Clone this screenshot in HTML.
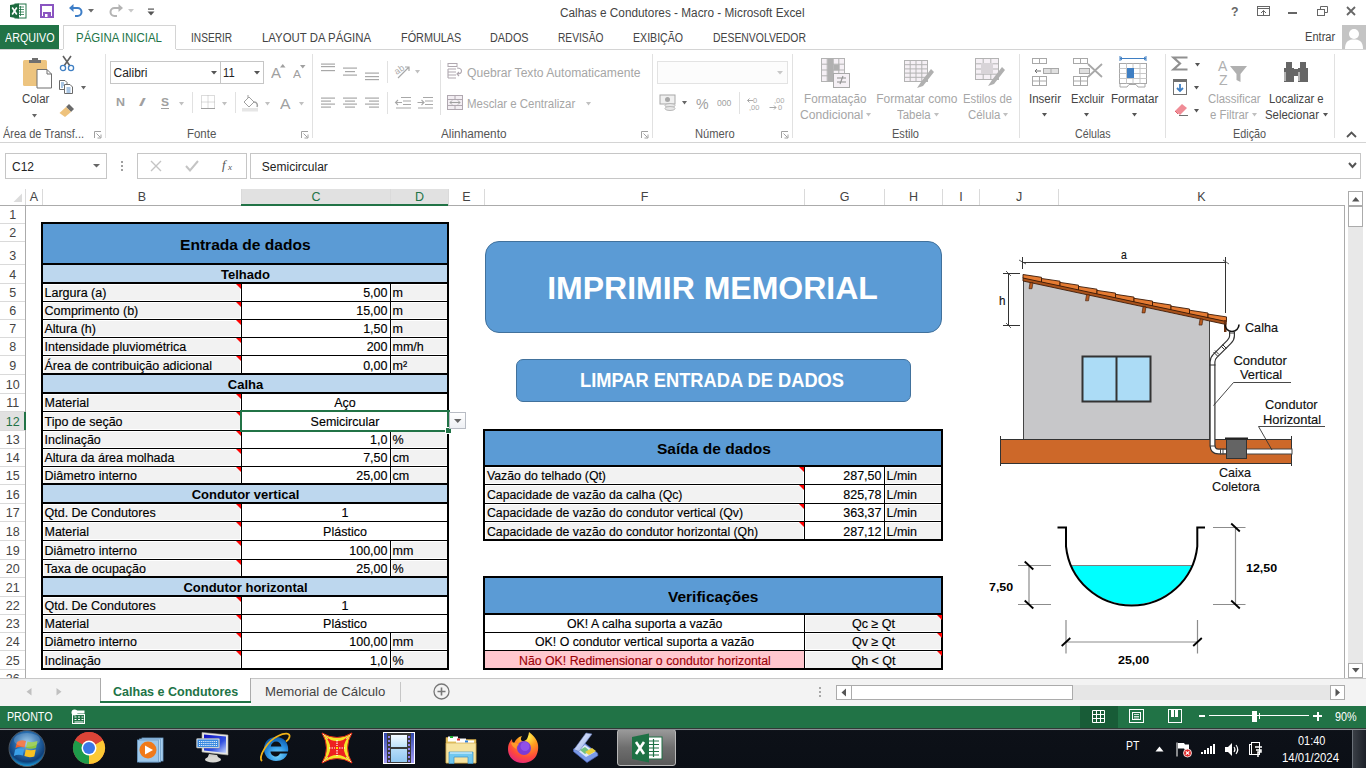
<!DOCTYPE html>
<html><head><meta charset="utf-8"><title>Calhas e Condutores - Macro - Microsoft Excel</title>
<style>
html,body{margin:0;padding:0;}
body{width:1366px;height:768px;overflow:hidden;position:relative;background:#fff;font-family:"Liberation Sans",sans-serif;}
.t{position:absolute;white-space:pre;font-family:"Liberation Sans",sans-serif;}
.k{-webkit-text-stroke:0.15px currentColor;}
.r{position:absolute;}
.s{position:absolute;overflow:visible;}
</style></head><body>

<svg class="s" style="left:10px;top:3px;" width="17" height="16" viewBox="0 0 17 16"><rect x="5" y="1" width="11" height="14" fill="#fff" stroke="#217346" stroke-width="1"/><path d="M8 4h6M8 6.5h6M8 9h6M8 11.5h6M10.5 3v10" stroke="#217346" stroke-width="0.8"/><path d="M0 2 L9 0.5 V15.5 L0 14 Z" fill="#1d6b3f"/><path d="M2.2 4.5 L6.8 11.5 M6.8 4.5 L2.2 11.5" stroke="#fff" stroke-width="1.6"/></svg>
<svg class="s" style="left:40px;top:4px;" width="14" height="14" viewBox="0 0 14 14"><rect x="1" y="1" width="12" height="12" fill="#fff" stroke="#8a55c1" stroke-width="2"/><rect x="3" y="8" width="8" height="6" fill="#8a55c1"/><rect x="5" y="10" width="2.5" height="3" fill="#fff"/></svg>
<svg class="s" style="left:68px;top:3px;" width="16" height="15" viewBox="0 0 16 15"><path d="M4 5 H9.5 A4 4 0 0 1 9.5 13 H7" fill="none" stroke="#3d7ec7" stroke-width="2"/><path d="M1 5 L5.5 1 V9 Z" fill="#3d7ec7"/></svg>
<svg class="s" style="left:88px;top:9px;" width="7" height="4" viewBox="0 0 7 4"><path d="M0 0 H6 L3 3.5Z" fill="#6a6a6a"/></svg>
<svg class="s" style="left:108px;top:3px;" width="16" height="15" viewBox="0 0 16 15"><path d="M12 5 H6.5 A4 4 0 0 0 6.5 13 H9" fill="none" stroke="#b4b4b4" stroke-width="2"/><path d="M15 5 L10.5 1 V9 Z" fill="#b4b4b4"/></svg>
<svg class="s" style="left:128px;top:9px;" width="7" height="4" viewBox="0 0 7 4"><path d="M0 0 H6 L3 3.5Z" fill="#c8c8c8"/></svg>
<svg class="s" style="left:147px;top:8px;" width="8" height="8" viewBox="0 0 8 8"><rect x="1" y="0.5" width="6" height="1.2" fill="#555"/><path d="M0.5 3.5 H7.5 L4 7.5Z" fill="#555"/></svg>
<div class="t" style="left:559.60px;top:7.00px;font-size:12px;line-height:12px;color:#444;transform:scaleX(0.9829);transform-origin:0 0;">Calhas e Condutores - Macro - Microsoft Excel</div>
<div class="t" style="left:1231.00px;top:6.00px;font-size:12px;line-height:12px;color:#666;font-weight:bold;transform:scaleX(1.0231);transform-origin:0 0;">?</div>
<svg class="s" style="left:1257px;top:6px;" width="13" height="10" viewBox="0 0 13 10"><rect x="0.5" y="0.5" width="12" height="9" fill="none" stroke="#666"/><path d="M0.5 2.5H12.5" stroke="#666"/><path d="M6.5 9.5V4.5M4 7L6.5 4.5L9 7" fill="none" stroke="#666"/></svg>
<div class="r" style="left:1288px;top:12px;width:9px;height:2px;background:#666;"></div>
<svg class="s" style="left:1317px;top:6px;" width="11" height="10" viewBox="0 0 11 10"><rect x="0.5" y="3.5" width="7" height="6" fill="#fff" stroke="#666"/><path d="M3.5 3.5V0.5H10.5V6.5H7.5" fill="none" stroke="#666"/></svg>
<svg class="s" style="left:1346px;top:6px;" width="10" height="10" viewBox="0 0 10 10"><path d="M1 1L9 9M9 1L1 9" stroke="#666" stroke-width="1.8"/></svg>
<div class="r" style="left:0px;top:25px;width:59px;height:24px;background:#217346;"></div>
<div class="t" style="left:4.50px;top:31.80px;font-size:12px;line-height:12px;color:#fff;transform:scaleX(0.8944);transform-origin:0 0;">ARQUIVO</div>
<div class="r" style="left:63px;top:25px;width:1px;height:24px;background:#d4d4d4;"></div>
<div class="r" style="left:63px;top:25px;width:113px;height:1px;background:#d4d4d4;"></div>
<div class="r" style="left:175px;top:25px;width:1px;height:24px;background:#d4d4d4;"></div>
<div class="r" style="left:0px;top:49px;width:63px;height:1px;background:#d4d4d4;"></div>
<div class="r" style="left:176px;top:49px;width:1190px;height:1px;background:#d4d4d4;"></div>
<div class="t" style="left:76.00px;top:32.00px;font-size:12px;line-height:12px;color:#217346;transform:scaleX(0.9552);transform-origin:0 0;">PÁGINA INICIAL</div>
<div class="t" style="left:190.60px;top:32.00px;font-size:12px;line-height:12px;color:#444;transform:scaleX(0.8444);transform-origin:0 0;">INSERIR</div>
<div class="t" style="left:261.60px;top:32.00px;font-size:12px;line-height:12px;color:#444;transform:scaleX(0.9493);transform-origin:0 0;">LAYOUT DA PÁGINA</div>
<div class="t" style="left:400.60px;top:32.00px;font-size:12px;line-height:12px;color:#444;transform:scaleX(0.9044);transform-origin:0 0;">FÓRMULAS</div>
<div class="t" style="left:490.20px;top:32.00px;font-size:12px;line-height:12px;color:#444;transform:scaleX(0.9045);transform-origin:0 0;">DADOS</div>
<div class="t" style="left:558.10px;top:32.00px;font-size:12px;line-height:12px;color:#444;transform:scaleX(0.8510);transform-origin:0 0;">REVISÃO</div>
<div class="t" style="left:633.40px;top:32.00px;font-size:12px;line-height:12px;color:#444;transform:scaleX(0.8838);transform-origin:0 0;">EXIBIÇÃO</div>
<div class="t" style="left:713.30px;top:32.00px;font-size:12px;line-height:12px;color:#444;transform:scaleX(0.8671);transform-origin:0 0;">DESENVOLVEDOR</div>
<div class="t" style="left:1304.70px;top:30.70px;font-size:12px;line-height:12px;color:#444;transform:scaleX(0.9241);transform-origin:0 0;">Entrar</div>
<div class="r" style="left:1342px;top:25px;width:24px;height:24px;background:#c4c4c4;"></div>
<svg class="s" style="left:1342px;top:25px;" width="24" height="24" viewBox="0 0 24 24"><circle cx="12" cy="9" r="5" fill="#fff"/><path d="M3 24 C3 16 7 14.5 12 14.5 C17 14.5 21 16 21 24Z" fill="#fff"/></svg>
<div class="r" style="left:0px;top:142px;width:1366px;height:1px;background:#d4d4d4;"></div>
<div class="r" style="left:105px;top:54px;width:1px;height:84px;background:#e1e1e1;"></div>
<div class="r" style="left:312px;top:54px;width:1px;height:84px;background:#e1e1e1;"></div>
<div class="r" style="left:652px;top:54px;width:1px;height:84px;background:#e1e1e1;"></div>
<div class="r" style="left:792px;top:54px;width:1px;height:84px;background:#e1e1e1;"></div>
<div class="r" style="left:1019px;top:54px;width:1px;height:84px;background:#e1e1e1;"></div>
<div class="r" style="left:1165px;top:54px;width:1px;height:84px;background:#e1e1e1;"></div>
<div class="r" style="left:1334px;top:54px;width:1px;height:84px;background:#e1e1e1;"></div>
<div class="t" style="left:3.00px;top:128.00px;font-size:12px;line-height:12px;color:#555;transform:scaleX(0.9131);transform-origin:0 0;">Área de Transf...</div>
<svg class="s" style="left:94px;top:131px;" width="8" height="8" viewBox="0 0 8 8"><path d="M0.5 7V0.5H7" fill="none" stroke="#a0a0a0"/><path d="M2.5 2.5L6.5 6.5M3.5 7H7V3.5" fill="none" stroke="#a0a0a0"/></svg>
<div class="t" style="left:186.50px;top:128.00px;font-size:12px;line-height:12px;color:#555;transform:scaleX(0.9548);transform-origin:0 0;">Fonte</div>
<svg class="s" style="left:301px;top:131px;" width="8" height="8" viewBox="0 0 8 8"><path d="M0.5 7V0.5H7" fill="none" stroke="#a0a0a0"/><path d="M2.5 2.5L6.5 6.5M3.5 7H7V3.5" fill="none" stroke="#a0a0a0"/></svg>
<div class="t" style="left:441.00px;top:128.00px;font-size:12px;line-height:12px;color:#555;transform:scaleX(0.9818);transform-origin:0 0;">Alinhamento</div>
<svg class="s" style="left:641px;top:131px;" width="8" height="8" viewBox="0 0 8 8"><path d="M0.5 7V0.5H7" fill="none" stroke="#a0a0a0"/><path d="M2.5 2.5L6.5 6.5M3.5 7H7V3.5" fill="none" stroke="#a0a0a0"/></svg>
<div class="t" style="left:694.70px;top:128.00px;font-size:12px;line-height:12px;color:#555;transform:scaleX(0.9278);transform-origin:0 0;">Número</div>
<svg class="s" style="left:781px;top:131px;" width="8" height="8" viewBox="0 0 8 8"><path d="M0.5 7V0.5H7" fill="none" stroke="#a0a0a0"/><path d="M2.5 2.5L6.5 6.5M3.5 7H7V3.5" fill="none" stroke="#a0a0a0"/></svg>
<div class="t" style="left:892.40px;top:128.00px;font-size:12px;line-height:12px;color:#555;transform:scaleX(0.9201);transform-origin:0 0;">Estilo</div>
<div class="t" style="left:1074.90px;top:128.00px;font-size:12px;line-height:12px;color:#555;transform:scaleX(0.8895);transform-origin:0 0;">Células</div>
<div class="t" style="left:1233.40px;top:128.00px;font-size:12px;line-height:12px;color:#555;transform:scaleX(0.9021);transform-origin:0 0;">Edição</div>
<svg class="s" style="left:1346px;top:131px;" width="11" height="7" viewBox="0 0 11 7"><path d="M1 6L5.5 1.5L10 6" fill="none" stroke="#555" stroke-width="1.8"/></svg>
<svg class="s" style="left:22px;top:57px;" width="31" height="32" viewBox="0 0 31 32"><rect x="1" y="3" width="24" height="26" rx="1.5" fill="#edc47f"/><path d="M7 6 V3 H10 V1 H16 V3 H19 V6 Z" fill="#6f6f6f"/><path d="M15 12.5 H25 L29.5 17 V31 H15 Z" fill="#fff" stroke="#6f6f6f" stroke-width="1"/><path d="M25 12.5 V17 H29.5" fill="none" stroke="#6f6f6f" stroke-width="1"/></svg>
<div class="t" style="left:21.70px;top:93.30px;font-size:12px;line-height:12px;color:#444;transform:scaleX(0.9520);transform-origin:0 0;">Colar</div>
<svg class="s" style="left:32.0px;top:113.5px;" width="5" height="4" viewBox="0 0 5 4"><path d="M0 0 H5 L2.5 3.5Z" fill="#666"/></svg>
<svg class="s" style="left:59px;top:55px;" width="16" height="17" viewBox="0 0 16 17"><path d="M4 1 L11 11 M12 1 L5 11" stroke="#606060" stroke-width="1.6"/><circle cx="4" cy="13" r="2.6" fill="none" stroke="#3f7fc3" stroke-width="1.3"/><circle cx="12" cy="13" r="2.6" fill="none" stroke="#3f7fc3" stroke-width="1.3"/></svg>
<svg class="s" style="left:58px;top:80px;" width="17" height="14" viewBox="0 0 17 14"><path d="M1.5 0.5H7L9 2.5V9.5H1.5Z" fill="#fff" stroke="#6a6a6a"/><path d="M6.5 4.5H12L14.5 7V13.5H6.5Z" fill="#fff" stroke="#6a6a6a"/><path d="M3 3H6M3 5H6M3 7H5M8.5 8H12.5M8.5 10H12.5M8.5 12H12.5" stroke="#3f7fc3" stroke-width="0.9"/></svg>
<svg class="s" style="left:81.0px;top:86.0px;" width="5" height="4" viewBox="0 0 5 4"><path d="M0 0 H5 L2.5 3.5Z" fill="#666"/></svg>
<svg class="s" style="left:58px;top:102px;" width="18" height="16" viewBox="0 0 18 16"><path d="M11 2 L16 7 L13 10 L8 5Z" fill="#6a6a6a"/><path d="M8 5 L13 10 L7 15 L1.5 11Z" fill="#eec27c"/></svg>
<div class="r" style="left:110px;top:61px;width:111px;height:23px;background:#fff;box-sizing:border-box;border:1px solid #c6c6c6;"></div>
<div class="r" style="left:220px;top:61px;width:44px;height:23px;background:#fff;box-sizing:border-box;border:1px solid #c6c6c6;"></div>
<div class="t" style="left:113.50px;top:66.50px;font-size:12px;line-height:12px;color:#222;">Calibri</div>
<svg class="s" style="left:210.5px;top:71.0px;" width="6" height="4" viewBox="0 0 6 4"><path d="M0 0 H6 L3.0 3.5Z" fill="#555"/></svg>
<div class="t" style="left:223.40px;top:66.50px;font-size:12px;line-height:12px;color:#222;transform:scaleX(0.9312);transform-origin:0 0;">11</div>
<svg class="s" style="left:253.5px;top:71.0px;" width="6" height="4" viewBox="0 0 6 4"><path d="M0 0 H6 L3.0 3.5Z" fill="#555"/></svg>
<div class="t" style="left:270.50px;top:66.00px;font-size:14px;line-height:14px;color:#a0a0a0;transform:scaleX(1.0708);transform-origin:0 0;">A</div>
<svg class="s" style="left:280px;top:64px;" width="6" height="4" viewBox="0 0 6 4"><path d="M0 3.5H5.5L2.75 0Z" fill="#a0a0a0"/></svg>
<div class="t" style="left:293.00px;top:68.50px;font-size:11px;line-height:11px;color:#a0a0a0;transform:scaleX(1.0903);transform-origin:0 0;">A</div>
<svg class="s" style="left:300px;top:65px;" width="6" height="4" viewBox="0 0 6 4"><path d="M0 0H5.5L2.75 3.5Z" fill="#a0a0a0"/></svg>
<div class="t" style="left:116.00px;top:96.75px;font-size:11.5px;line-height:11.5px;color:#a0a0a0;font-weight:bold;transform:scaleX(1.0837);transform-origin:0 0;">N</div>
<div class="t" style="left:138.00px;top:96.75px;font-size:11.5px;line-height:11.5px;color:#a0a0a0;transform:scaleX(2.5040);transform-origin:0 0;font-style:italic;">I</div>
<div class="t" style="left:161.00px;top:96.75px;font-size:11.5px;line-height:11.5px;color:#a0a0a0;font-weight:bold;transform:scaleX(1.0429);transform-origin:0 0;">S</div>
<div class="r" style="left:161px;top:108px;width:8px;height:1px;background:#a0a0a0;"></div>
<svg class="s" style="left:178.5px;top:102.0px;" width="5" height="4" viewBox="0 0 5 4"><path d="M0 0 H5 L2.5 3.5Z" fill="#c0c0c0"/></svg>
<div class="r" style="left:192px;top:92px;width:1px;height:21px;background:#e1e1e1;"></div>
<svg class="s" style="left:201px;top:95px;" width="14" height="14" viewBox="0 0 14 14"><path d="M0.5 0.5H13.5V13.5H0.5ZM7 0.5V13.5M0.5 7H13.5" fill="none" stroke="#b8b8b8" stroke-dasharray="1 1"/><path d="M0 13.5H14" stroke="#a0a0a0"/></svg>
<svg class="s" style="left:222.0px;top:102.0px;" width="5" height="4" viewBox="0 0 5 4"><path d="M0 0 H5 L2.5 3.5Z" fill="#c0c0c0"/></svg>
<div class="r" style="left:235px;top:92px;width:1px;height:21px;background:#e1e1e1;"></div>
<svg class="s" style="left:242px;top:94px;" width="18" height="18" viewBox="0 0 18 18"><path d="M6 1 V5" stroke="#a0a0a0"/><path d="M2 8 L7 3 L12 8 L7 13Z" fill="#fff" stroke="#a0a0a0"/><path d="M12 8 C15 8 16 11 15 13" fill="none" stroke="#a0a0a0" stroke-width="1.5"/><rect x="0" y="14" width="16" height="3.5" fill="#e6e6e6"/></svg>
<svg class="s" style="left:265.0px;top:102.0px;" width="5" height="4" viewBox="0 0 5 4"><path d="M0 0 H5 L2.5 3.5Z" fill="#c0c0c0"/></svg>
<div class="t" style="left:280.00px;top:96.50px;font-size:14px;line-height:14px;color:#a0a0a0;transform:scaleX(1.1244);transform-origin:0 0;">A</div>
<svg class="s" style="left:299.0px;top:102.0px;" width="5" height="4" viewBox="0 0 5 4"><path d="M0 0 H5 L2.5 3.5Z" fill="#c0c0c0"/></svg>
<svg class="s" style="left:321px;top:63px;" width="16" height="16" viewBox="0 0 16 16"><rect x="0" y="0.5" width="14" height="1.2" fill="#a8a8a8"/><rect x="0" y="3" width="14" height="1.2" fill="#a8a8a8"/><rect x="0" y="7" width="14" height="1.2" fill="#a8a8a8"/></svg>
<svg class="s" style="left:343px;top:67px;" width="16" height="16" viewBox="0 0 16 16"><rect x="0" y="0.5" width="14" height="1.2" fill="#a8a8a8"/><rect x="2" y="4" width="10" height="1.2" fill="#a8a8a8"/><rect x="0" y="7.5" width="14" height="1.2" fill="#a8a8a8"/></svg>
<svg class="s" style="left:365px;top:72px;" width="16" height="16" viewBox="0 0 16 16"><rect x="0" y="0.5" width="14" height="1.2" fill="#a8a8a8"/><rect x="0" y="4" width="14" height="1.2" fill="#a8a8a8"/><rect x="0" y="7" width="14" height="1.2" fill="#a8a8a8"/></svg>
<svg class="s" style="left:321px;top:97px;" width="16" height="16" viewBox="0 0 16 16"><rect x="0" y="0.5" width="14" height="1.2" fill="#a8a8a8"/><rect x="0" y="3.5" width="10" height="1.2" fill="#a8a8a8"/><rect x="0" y="6.5" width="14" height="1.2" fill="#a8a8a8"/><rect x="0" y="9.5" width="10" height="1.2" fill="#a8a8a8"/></svg>
<svg class="s" style="left:343px;top:97px;" width="16" height="16" viewBox="0 0 16 16"><rect x="0" y="0.5" width="14" height="1.2" fill="#a8a8a8"/><rect x="2" y="3.5" width="10" height="1.2" fill="#a8a8a8"/><rect x="0" y="6.5" width="14" height="1.2" fill="#a8a8a8"/><rect x="2" y="9.5" width="10" height="1.2" fill="#a8a8a8"/></svg>
<svg class="s" style="left:365px;top:97px;" width="16" height="16" viewBox="0 0 16 16"><rect x="0" y="0.5" width="14" height="1.2" fill="#a8a8a8"/><rect x="4" y="3.5" width="10" height="1.2" fill="#a8a8a8"/><rect x="0" y="6.5" width="14" height="1.2" fill="#a8a8a8"/><rect x="4" y="9.5" width="10" height="1.2" fill="#a8a8a8"/></svg>
<div class="r" style="left:387px;top:61px;width:1px;height:22px;background:#e1e1e1;"></div>
<div class="r" style="left:387px;top:92px;width:1px;height:22px;background:#e1e1e1;"></div>
<svg class="s" style="left:394px;top:63px;" width="18" height="16" viewBox="0 0 18 16"><text x="1" y="10" font-size="9" fill="#a8a8a8" transform="rotate(-35 5 8)" font-family="Liberation Sans">ab</text><path d="M4 15 L15 4 M11 4H15V8" fill="none" stroke="#a8a8a8" stroke-width="1.2"/></svg>
<svg class="s" style="left:415.0px;top:69.5px;" width="5" height="4" viewBox="0 0 5 4"><path d="M0 0 H5 L2.5 3.5Z" fill="#c0c0c0"/></svg>
<svg class="s" style="left:395px;top:97px;" width="17" height="12" viewBox="0 0 17 12"><path d="M6 0.5H16M8 4H16M8 7.5H16M1 11H16" stroke="#a8a8a8" stroke-width="1.1"/><path d="M0.5 5.5H7 M3 3L0.5 5.5L3 8" fill="none" stroke="#a8a8a8" stroke-width="1.1"/></svg>
<svg class="s" style="left:417px;top:97px;" width="17" height="12" viewBox="0 0 17 12"><path d="M6 0.5H16M8 4H16M8 7.5H16M1 11H16" stroke="#a8a8a8" stroke-width="1.1"/><path d="M0.5 5.5H7 M4.5 3L7 5.5L4.5 8" fill="none" stroke="#a8a8a8" stroke-width="1.1"/></svg>
<div class="r" style="left:440px;top:60px;width:1px;height:55px;background:#e1e1e1;"></div>
<svg class="s" style="left:447px;top:63px;" width="18" height="16" viewBox="0 0 18 16"><rect x="1" y="0.5" width="9" height="3" fill="none" stroke="#b0a8b0"/><path d="M1 6H9M1 9H9M1 12H9M1 15H9M1 6V15" stroke="#b0a8b0" stroke-width="1.1"/><path d="M10 5 C16 5 16 11 10 11 M12 9L10 11L12 13" fill="none" stroke="#b0a8b0" stroke-width="1.1"/></svg>
<div class="t" style="left:467.40px;top:67.20px;font-size:12px;line-height:12px;color:#a6a6a6;transform:scaleX(1.0094);transform-origin:0 0;">Quebrar Texto Automaticamente</div>
<svg class="s" style="left:447px;top:95px;" width="17" height="15" viewBox="0 0 17 15"><rect x="0.5" y="0.5" width="15" height="14" fill="#f3eef3" stroke="#b0a8b0"/><path d="M0.5 4.5H15.5M0.5 10.5H15.5M8 0.5V4.5M8 10.5V14.5" stroke="#b0a8b0"/><path d="M3 7.5H13M5 5.5L3 7.5L5 9.5M11 5.5L13 7.5L11 9.5" fill="none" stroke="#a0a0a0"/></svg>
<div class="t" style="left:467.40px;top:97.80px;font-size:12px;line-height:12px;color:#a6a6a6;transform:scaleX(0.9544);transform-origin:0 0;">Mesclar e Centralizar</div>
<svg class="s" style="left:586.0px;top:102.0px;" width="5" height="4" viewBox="0 0 5 4"><path d="M0 0 H5 L2.5 3.5Z" fill="#c0c0c0"/></svg>
<div class="r" style="left:657px;top:61px;width:131px;height:23px;background:#fcfcfc;box-sizing:border-box;border:1px solid #e3e3e3;"></div>
<svg class="s" style="left:777.0px;top:71.0px;" width="6" height="4" viewBox="0 0 6 4"><path d="M0 0 H6 L3.0 3.5Z" fill="#c8c8c8"/></svg>
<svg class="s" style="left:659px;top:94px;" width="18" height="18" viewBox="0 0 18 18"><rect x="1" y="1" width="15" height="9" fill="#f0f0f0" stroke="#a8a8a8"/><circle cx="8.5" cy="5.5" r="2.5" fill="#a8a8a8"/><ellipse cx="11" cy="11.5" rx="5" ry="2" fill="#e8e8e8" stroke="#b8b8b8"/><ellipse cx="11" cy="14.5" rx="5" ry="2" fill="#e8e8e8" stroke="#b8b8b8"/></svg>
<svg class="s" style="left:682.0px;top:101.0px;" width="5" height="4" viewBox="0 0 5 4"><path d="M0 0 H5 L2.5 3.5Z" fill="#666"/></svg>
<div class="t" style="left:696.00px;top:95.80px;font-size:15px;line-height:15px;color:#a0a0a0;transform:scaleX(0.9447);transform-origin:0 0;">%</div>
<div class="t" style="left:716.60px;top:97.75px;font-size:9.5px;line-height:9.5px;color:#a0a0a0;transform:scaleX(0.9085);transform-origin:0 0;">000</div>
<div class="r" style="left:739px;top:92px;width:1px;height:22px;background:#e1e1e1;"></div>
<svg class="s" style="left:747px;top:97px;" width="16" height="14" viewBox="0 0 16 14"><text x="6" y="6" font-size="7.5" fill="#a8a8a8" font-family="Liberation Sans">0</text><text x="2" y="13" font-size="7.5" fill="#a8a8a8" font-family="Liberation Sans">,00</text><path d="M0.5 3.5H6 M2.5 1.5L0.5 3.5L2.5 5.5" fill="none" stroke="#a8a8a8"/></svg>
<svg class="s" style="left:769px;top:97px;" width="16" height="14" viewBox="0 0 16 14"><text x="5" y="6" font-size="7.5" fill="#a8a8a8" font-family="Liberation Sans">,00</text><text x="9" y="13" font-size="7.5" fill="#a8a8a8" font-family="Liberation Sans">0</text><path d="M0.5 10.5H7 M5 8.5L7 10.5L5 12.5" fill="none" stroke="#a8a8a8"/></svg>
<svg class="s" style="left:821px;top:58px;" width="32" height="32" viewBox="0 0 32 32"><rect x="0.5" y="0.5" width="23" height="23" fill="#f5f0f5" stroke="#b3b3b3"/><path d="M6.2 0.5V23.5" stroke="#b3b3b3"/><path d="M12.0 0.5V23.5" stroke="#b3b3b3"/><path d="M17.8 0.5V23.5" stroke="#b3b3b3"/><path d="M0.5 6.2H23.5" stroke="#b3b3b3"/><path d="M0.5 12.0H23.5" stroke="#b3b3b3"/><path d="M0.5 17.8H23.5" stroke="#b3b3b3"/><rect x="6.5" y="0.5" width="6" height="23" fill="#b0b0b0"/><rect x="12.5" y="6.5" width="6" height="6" fill="#b0b0b0"/><rect x="12.5" y="15.5" width="16" height="14" fill="#f5f0f5" stroke="#a8a8a8"/><path d="M16 20H25M16 24H25M22 18L19 26" stroke="#909090" stroke-width="1.1"/></svg>
<div class="t" style="left:804.20px;top:93.10px;font-size:12px;line-height:12px;color:#a6a6a6;transform:scaleX(0.9761);transform-origin:0 0;">Formatação</div>
<div class="t" style="left:799.60px;top:108.90px;font-size:12px;line-height:12px;color:#a6a6a6;transform:scaleX(1.0094);transform-origin:0 0;">Condicional</div>
<svg class="s" style="left:866.1px;top:112.5px;" width="5" height="4" viewBox="0 0 5 4"><path d="M0 0 H5 L2.5 3.5Z" fill="#c0c0c0"/></svg>
<svg class="s" style="left:904px;top:60px;" width="32" height="30" viewBox="0 0 32 30"><rect x="0.5" y="0.5" width="23" height="21" fill="#f5f0f5" stroke="#b3b3b3"/><path d="M6.2 0.5V21.5" stroke="#b3b3b3"/><path d="M12.0 0.5V21.5" stroke="#b3b3b3"/><path d="M17.8 0.5V21.5" stroke="#b3b3b3"/><path d="M0.5 4.7H23.5" stroke="#b3b3b3"/><path d="M0.5 8.9H23.5" stroke="#b3b3b3"/><path d="M0.5 13.1H23.5" stroke="#b3b3b3"/><path d="M0.5 17.3H23.5" stroke="#b3b3b3"/><path d="M30 12 L19 26 L13 28 L17 22 L27 9Z" fill="#b0b0b0"/></svg>
<div class="t" style="left:876.20px;top:93.10px;font-size:12px;line-height:12px;color:#a6a6a6;">Formatar como</div>
<div class="t" style="left:896.80px;top:108.90px;font-size:12px;line-height:12px;color:#a6a6a6;transform:scaleX(0.9530);transform-origin:0 0;">Tabela</div>
<svg class="s" style="left:933.7px;top:112.5px;" width="5" height="4" viewBox="0 0 5 4"><path d="M0 0 H5 L2.5 3.5Z" fill="#c0c0c0"/></svg>
<svg class="s" style="left:975px;top:58px;" width="32" height="30" viewBox="0 0 32 30"><rect x="0.5" y="0.5" width="23" height="21" fill="#f5f0f5" stroke="#b3b3b3"/><path d="M8.2 0.5V21.5" stroke="#b3b3b3"/><path d="M15.8 0.5V21.5" stroke="#b3b3b3"/><path d="M0.5 5.8H23.5" stroke="#b3b3b3"/><path d="M0.5 11.0H23.5" stroke="#b3b3b3"/><path d="M0.5 16.2H23.5" stroke="#b3b3b3"/><rect x="6" y="5" width="12" height="11" fill="#d8d4d8"/><path d="M30 12 L19 26 L13 28 L17 22 L27 9Z" fill="#b0b0b0"/></svg>
<div class="t" style="left:963.40px;top:93.10px;font-size:12px;line-height:12px;color:#a6a6a6;transform:scaleX(0.9418);transform-origin:0 0;">Estilos de</div>
<div class="t" style="left:967.60px;top:108.90px;font-size:12px;line-height:12px;color:#a6a6a6;transform:scaleX(0.9524);transform-origin:0 0;">Célula</div>
<svg class="s" style="left:1002.5px;top:112.5px;" width="5" height="4" viewBox="0 0 5 4"><path d="M0 0 H5 L2.5 3.5Z" fill="#c0c0c0"/></svg>
<svg class="s" style="left:1032px;top:58px;" width="27" height="28" viewBox="0 0 27 28"><rect x="0.5" y="0.5" width="14" height="5" fill="#fff" stroke="#a8a8a8"/><path d="M7.5 0.5V5.5" stroke="#a8a8a8"/><rect x="11.5" y="10.5" width="15" height="5" fill="#e0e0e0" stroke="#a8a8a8"/><path d="M19 10.5V15.5" stroke="#a8a8a8"/><path d="M3 13H9M5 11L3 13L5 15" fill="none" stroke="#707070"/><rect x="0.5" y="18.5" width="14" height="9" fill="#fff" stroke="#a8a8a8"/><path d="M7.5 18.5V27.5M0.5 23H14.5" stroke="#a8a8a8"/></svg>
<div class="t" style="left:1029.00px;top:93.10px;font-size:12px;line-height:12px;color:#444;transform:scaleX(0.9598);transform-origin:0 0;">Inserir</div>
<svg class="s" style="left:1042.0px;top:113.0px;" width="5" height="4" viewBox="0 0 5 4"><path d="M0 0 H5 L2.5 3.5Z" fill="#555"/></svg>
<svg class="s" style="left:1073px;top:58px;" width="31" height="28" viewBox="0 0 31 28"><rect x="0.5" y="0.5" width="14" height="5" fill="#fff" stroke="#a8a8a8"/><path d="M7.5 0.5V5.5" stroke="#a8a8a8"/><rect x="6.5" y="10.5" width="10" height="5" fill="#e0e0e0" stroke="#a8a8a8"/><rect x="0.5" y="18.5" width="14" height="9" fill="#fff" stroke="#a8a8a8"/><path d="M7.5 18.5V27.5M0.5 23H14.5" stroke="#a8a8a8"/><path d="M15 6 L29 19 M29 6 L15 19" stroke="#a8a8a8" stroke-width="1.8"/></svg>
<div class="t" style="left:1070.50px;top:93.10px;font-size:12px;line-height:12px;color:#444;transform:scaleX(0.9248);transform-origin:0 0;">Excluir</div>
<svg class="s" style="left:1084.0px;top:113.0px;" width="5" height="4" viewBox="0 0 5 4"><path d="M0 0 H5 L2.5 3.5Z" fill="#555"/></svg>
<svg class="s" style="left:1119px;top:56px;" width="30" height="33" viewBox="0 0 30 33"><path d="M1 2.5H27M1 0V5M27 0V5M3 1L1 2.5L3 4M25 1L27 2.5L25 4" fill="none" stroke="#3f7fc3"/><rect x="0.5" y="7.5" width="27" height="20" fill="#fff" stroke="#a8a8a8"/><path d="M7.5 7.5V27.5M14 7.5V27.5M21 7.5V27.5M0.5 12.5H27.5M0.5 17.5H27.5M0.5 22.5H27.5" stroke="#c8c8c8"/><rect x="8" y="12" width="7" height="10" fill="#3f7fc3"/><path d="M1 27.5V31H8L10 28.5H17L19 31H26V27.5" fill="none" stroke="#a8a8a8"/></svg>
<div class="t" style="left:1110.70px;top:93.10px;font-size:12px;line-height:12px;color:#444;transform:scaleX(0.9717);transform-origin:0 0;">Formatar</div>
<svg class="s" style="left:1132.0px;top:113.0px;" width="5" height="4" viewBox="0 0 5 4"><path d="M0 0 H5 L2.5 3.5Z" fill="#555"/></svg>
<svg class="s" style="left:1172px;top:56px;" width="17" height="15" viewBox="0 0 17 15"><path d="M15.5 1.5H1.5L8 7.5L1.5 13.5H15.5" fill="none" stroke="#909090" stroke-width="2.2"/></svg>
<svg class="s" style="left:1195.0px;top:63.0px;" width="5" height="4" viewBox="0 0 5 4"><path d="M0 0 H5 L2.5 3.5Z" fill="#555"/></svg>
<svg class="s" style="left:1173px;top:79px;" width="15" height="16" viewBox="0 0 15 16"><rect x="0.5" y="0.5" width="13" height="15" fill="#fff" stroke="#707070"/><rect x="0" y="0" width="14" height="3" fill="#707070"/><path d="M7 5V12M4 9L7 12L10 9" fill="none" stroke="#3f7fc3" stroke-width="1.8"/></svg>
<svg class="s" style="left:1193.5px;top:86.0px;" width="5" height="4" viewBox="0 0 5 4"><path d="M0 0 H5 L2.5 3.5Z" fill="#555"/></svg>
<svg class="s" style="left:1174px;top:103px;" width="15" height="13" viewBox="0 0 15 13"><path d="M1 8 L8 1 L13 5 L6 12Z" fill="#f08c96"/><path d="M1 8L4 11" stroke="#e0606a"/><path d="M5 12.5H14" stroke="#707070"/></svg>
<svg class="s" style="left:1193.5px;top:109.0px;" width="5" height="4" viewBox="0 0 5 4"><path d="M0 0 H5 L2.5 3.5Z" fill="#555"/></svg>
<svg class="s" style="left:1218px;top:59px;" width="31" height="27" viewBox="0 0 31 27"><text x="0" y="12" font-size="14" fill="#b0b0b0" font-family="Liberation Sans">A</text><text x="1" y="26" font-size="14" fill="#b0b0b0" font-family="Liberation Sans">Z</text><path d="M12 7H29L22.5 15V23L18.5 21V15Z" fill="#b0b0b0"/></svg>
<div class="t" style="left:1207.50px;top:93.40px;font-size:12px;line-height:12px;color:#a6a6a6;transform:scaleX(0.9486);transform-origin:0 0;">Classificar</div>
<div class="t" style="left:1210.40px;top:109.00px;font-size:12px;line-height:12px;color:#a6a6a6;transform:scaleX(0.9491);transform-origin:0 0;">e Filtrar</div>
<svg class="s" style="left:1252.3px;top:112.5px;" width="5" height="4" viewBox="0 0 5 4"><path d="M0 0 H5 L2.5 3.5Z" fill="#c0c0c0"/></svg>
<svg class="s" style="left:1283px;top:60px;" width="26" height="23" viewBox="0 0 26 23"><path d="M3 2H9V8H11V22H1V8H3Z" fill="#666"/><path d="M17 2H23V8H25V22H15V8H17Z" fill="#666"/><rect x="10" y="9" width="6" height="7" fill="#666"/><path d="M2 12V21M16 12V21" stroke="#fff" stroke-width="1"/></svg>
<div class="t" style="left:1269.40px;top:93.40px;font-size:12px;line-height:12px;color:#444;transform:scaleX(0.9408);transform-origin:0 0;">Localizar e</div>
<div class="t" style="left:1265.00px;top:109.00px;font-size:12px;line-height:12px;color:#444;transform:scaleX(0.9523);transform-origin:0 0;">Selecionar</div>
<svg class="s" style="left:1322.5px;top:112.5px;" width="5" height="4" viewBox="0 0 5 4"><path d="M0 0 H5 L2.5 3.5Z" fill="#555"/></svg>
<div class="r" style="left:5px;top:153px;width:102px;height:26px;background:#fff;box-sizing:border-box;border:1px solid #c6c6c6;"></div>
<div class="t" style="left:12.00px;top:160.70px;font-size:12px;line-height:12px;color:#222;">C12</div>
<svg class="s" style="left:92.5px;top:163.5px;" width="7" height="4" viewBox="0 0 7 4"><path d="M0 0 H7 L3.5 3.5Z" fill="#666"/></svg>
<div class="r" style="left:121px;top:161px;width:2px;height:2px;background:#a0a0a0;"></div>
<div class="r" style="left:121px;top:165px;width:2px;height:2px;background:#a0a0a0;"></div>
<div class="r" style="left:121px;top:169px;width:2px;height:2px;background:#a0a0a0;"></div>
<div class="r" style="left:137px;top:153px;width:110px;height:26px;background:#fff;box-sizing:border-box;border:1px solid #c6c6c6;"></div>
<svg class="s" style="left:150px;top:160px;" width="12" height="12" viewBox="0 0 12 12"><path d="M1 1L11 11M11 1L1 11" stroke="#c4c4c4" stroke-width="1.4"/></svg>
<svg class="s" style="left:185px;top:160px;" width="14" height="12" viewBox="0 0 14 12"><path d="M1 6L5 10.5L13 1" fill="none" stroke="#c4c4c4" stroke-width="2"/></svg>
<svg class="s" style="left:222px;top:158px;" width="14" height="15" viewBox="0 0 14 15"><text x="0" y="11" font-size="13" font-style="italic" fill="#555" font-family="Liberation Serif">f</text><text x="6" y="12" font-size="9" font-style="italic" fill="#555" font-family="Liberation Serif">x</text></svg>
<div class="r" style="left:250px;top:153px;width:1111px;height:26px;background:#fff;box-sizing:border-box;border:1px solid #c6c6c6;"></div>
<div class="t" style="left:261.80px;top:160.70px;font-size:12px;line-height:12px;color:#222;">Semicircular</div>
<svg class="s" style="left:1348px;top:162px;" width="9" height="7" viewBox="0 0 9 7"><path d="M1 1L4.5 5L8 1" fill="none" stroke="#555" stroke-width="2"/></svg>
<svg class="s" style="left:13px;top:193px;" width="10" height="10" viewBox="0 0 10 10"><path d="M9 0.5V9H0.5Z" fill="#dcdcdc"/></svg>
<div class="r" style="left:25px;top:189px;width:1px;height:16px;background:#dadada;"></div>
<div class="r" style="left:241px;top:189px;width:207px;height:16px;background:#e1e1e1;"></div>
<div class="r" style="left:42px;top:189px;width:1px;height:16px;background:#dadada;"></div>
<div class="t" style="left:29.83px;top:190.55px;font-size:12.5px;line-height:12.5px;color:#444;">A</div>
<div class="r" style="left:241px;top:189px;width:1px;height:16px;background:#dadada;"></div>
<div class="t" style="left:137.83px;top:190.55px;font-size:12.5px;line-height:12.5px;color:#444;">B</div>
<div class="r" style="left:390px;top:189px;width:1px;height:16px;background:#dadada;"></div>
<div class="t" style="left:311.49px;top:190.55px;font-size:12.5px;line-height:12.5px;color:#217346;">C</div>
<div class="r" style="left:448px;top:189px;width:1px;height:16px;background:#dadada;"></div>
<div class="t" style="left:414.99px;top:190.55px;font-size:12.5px;line-height:12.5px;color:#217346;">D</div>
<div class="r" style="left:484px;top:189px;width:1px;height:16px;background:#dadada;"></div>
<div class="t" style="left:462.33px;top:190.55px;font-size:12.5px;line-height:12.5px;color:#444;">E</div>
<div class="r" style="left:804px;top:189px;width:1px;height:16px;background:#dadada;"></div>
<div class="t" style="left:640.68px;top:190.55px;font-size:12.5px;line-height:12.5px;color:#444;">F</div>
<div class="r" style="left:884px;top:189px;width:1px;height:16px;background:#dadada;"></div>
<div class="t" style="left:839.64px;top:190.55px;font-size:12.5px;line-height:12.5px;color:#444;">G</div>
<div class="r" style="left:942px;top:189px;width:1px;height:16px;background:#dadada;"></div>
<div class="t" style="left:908.99px;top:190.55px;font-size:12.5px;line-height:12.5px;color:#444;">H</div>
<div class="r" style="left:979px;top:189px;width:1px;height:16px;background:#dadada;"></div>
<div class="t" style="left:959.26px;top:190.55px;font-size:12.5px;line-height:12.5px;color:#444;">I</div>
<div class="r" style="left:1058px;top:189px;width:1px;height:16px;background:#dadada;"></div>
<div class="t" style="left:1015.88px;top:190.55px;font-size:12.5px;line-height:12.5px;color:#444;">J</div>
<div class="t" style="left:1197.33px;top:190.55px;font-size:12.5px;line-height:12.5px;color:#444;">K</div>
<div class="r" style="left:0px;top:205px;width:1344px;height:1px;background:#ababab;"></div>
<div class="r" style="left:241px;top:204px;width:207px;height:2px;background:#217346;"></div>
<div class="r" style="left:25px;top:205px;width:1px;height:473px;background:#ababab;"></div>
<div class="r" style="left:1344px;top:205px;width:1px;height:473px;background:#ababab;"></div>
<div class="r" style="left:0px;top:412px;width:25px;height:18px;background:#e1e1e1;"></div>
<div class="r" style="left:24px;top:412px;width:2px;height:18px;background:#217346;"></div>
<div class="r" style="left:0px;top:223px;width:25px;height:1px;background:#dadada;"></div>
<div class="t" style="left:9.32px;top:208.75px;font-size:12.5px;line-height:12.5px;color:#444;">1</div>
<div class="r" style="left:0px;top:241px;width:25px;height:1px;background:#dadada;"></div>
<div class="t" style="left:9.32px;top:226.75px;font-size:12.5px;line-height:12.5px;color:#444;">2</div>
<div class="r" style="left:0px;top:264px;width:25px;height:1px;background:#dadada;"></div>
<div class="t" style="left:9.32px;top:249.75px;font-size:12.5px;line-height:12.5px;color:#444;">3</div>
<div class="r" style="left:0px;top:283px;width:25px;height:1px;background:#dadada;"></div>
<div class="t" style="left:9.32px;top:268.75px;font-size:12.5px;line-height:12.5px;color:#444;">4</div>
<div class="r" style="left:0px;top:301px;width:25px;height:1px;background:#dadada;"></div>
<div class="t" style="left:9.32px;top:286.75px;font-size:12.5px;line-height:12.5px;color:#444;">5</div>
<div class="r" style="left:0px;top:319px;width:25px;height:1px;background:#dadada;"></div>
<div class="t" style="left:9.32px;top:304.75px;font-size:12.5px;line-height:12.5px;color:#444;">6</div>
<div class="r" style="left:0px;top:337px;width:25px;height:1px;background:#dadada;"></div>
<div class="t" style="left:9.32px;top:322.75px;font-size:12.5px;line-height:12.5px;color:#444;">7</div>
<div class="r" style="left:0px;top:355px;width:25px;height:1px;background:#dadada;"></div>
<div class="t" style="left:9.32px;top:340.75px;font-size:12.5px;line-height:12.5px;color:#444;">8</div>
<div class="r" style="left:0px;top:374px;width:25px;height:1px;background:#dadada;"></div>
<div class="t" style="left:9.32px;top:359.75px;font-size:12.5px;line-height:12.5px;color:#444;">9</div>
<div class="r" style="left:0px;top:393px;width:25px;height:1px;background:#dadada;"></div>
<div class="t" style="left:5.85px;top:378.75px;font-size:12.5px;line-height:12.5px;color:#444;">10</div>
<div class="r" style="left:0px;top:411px;width:25px;height:1px;background:#dadada;"></div>
<div class="t" style="left:6.31px;top:396.75px;font-size:12.5px;line-height:12.5px;color:#444;">11</div>
<div class="r" style="left:0px;top:430px;width:25px;height:1px;background:#dadada;"></div>
<div class="t" style="left:5.85px;top:415.75px;font-size:12.5px;line-height:12.5px;color:#217346;">12</div>
<div class="r" style="left:0px;top:448px;width:25px;height:1px;background:#dadada;"></div>
<div class="t" style="left:5.85px;top:433.75px;font-size:12.5px;line-height:12.5px;color:#444;">13</div>
<div class="r" style="left:0px;top:466px;width:25px;height:1px;background:#dadada;"></div>
<div class="t" style="left:5.85px;top:451.75px;font-size:12.5px;line-height:12.5px;color:#444;">14</div>
<div class="r" style="left:0px;top:484px;width:25px;height:1px;background:#dadada;"></div>
<div class="t" style="left:5.85px;top:469.75px;font-size:12.5px;line-height:12.5px;color:#444;">15</div>
<div class="r" style="left:0px;top:503px;width:25px;height:1px;background:#dadada;"></div>
<div class="t" style="left:5.85px;top:488.75px;font-size:12.5px;line-height:12.5px;color:#444;">16</div>
<div class="r" style="left:0px;top:521px;width:25px;height:1px;background:#dadada;"></div>
<div class="t" style="left:5.85px;top:506.75px;font-size:12.5px;line-height:12.5px;color:#444;">17</div>
<div class="r" style="left:0px;top:540px;width:25px;height:1px;background:#dadada;"></div>
<div class="t" style="left:5.85px;top:525.75px;font-size:12.5px;line-height:12.5px;color:#444;">18</div>
<div class="r" style="left:0px;top:559px;width:25px;height:1px;background:#dadada;"></div>
<div class="t" style="left:5.85px;top:544.75px;font-size:12.5px;line-height:12.5px;color:#444;">19</div>
<div class="r" style="left:0px;top:577px;width:25px;height:1px;background:#dadada;"></div>
<div class="t" style="left:5.85px;top:562.75px;font-size:12.5px;line-height:12.5px;color:#444;">20</div>
<div class="r" style="left:0px;top:596px;width:25px;height:1px;background:#dadada;"></div>
<div class="t" style="left:5.85px;top:581.75px;font-size:12.5px;line-height:12.5px;color:#444;">21</div>
<div class="r" style="left:0px;top:614px;width:25px;height:1px;background:#dadada;"></div>
<div class="t" style="left:5.85px;top:599.75px;font-size:12.5px;line-height:12.5px;color:#444;">22</div>
<div class="r" style="left:0px;top:632px;width:25px;height:1px;background:#dadada;"></div>
<div class="t" style="left:5.85px;top:617.75px;font-size:12.5px;line-height:12.5px;color:#444;">23</div>
<div class="r" style="left:0px;top:650px;width:25px;height:1px;background:#dadada;"></div>
<div class="t" style="left:5.85px;top:635.75px;font-size:12.5px;line-height:12.5px;color:#444;">24</div>
<div class="r" style="left:0px;top:669px;width:25px;height:1px;background:#dadada;"></div>
<div class="t" style="left:5.85px;top:654.75px;font-size:12.5px;line-height:12.5px;color:#444;">25</div>
<div class="t" style="left:5.85px;top:672.75px;font-size:12.5px;line-height:12.5px;color:#444;">26</div>
<div class="r" style="left:43px;top:224px;width:405px;height:40px;background:#5b9bd5;"></div>
<div class="t" style="left:180.20px;top:236.70px;font-size:15px;line-height:15px;color:#000;font-weight:bold;transform:scaleX(1.0376);transform-origin:0 0;">Entrada de dados</div>
<div class="r" style="left:43px;top:265px;width:405px;height:18px;background:#bdd7ee;"></div>
<div class="r" style="left:43px;top:375px;width:405px;height:18px;background:#bdd7ee;"></div>
<div class="r" style="left:43px;top:485px;width:405px;height:18px;background:#bdd7ee;"></div>
<div class="r" style="left:43px;top:578px;width:405px;height:18px;background:#bdd7ee;"></div>
<div class="r" style="left:44px;top:285px;width:196px;height:15px;background:#f2f2f2;"></div>
<div class="r" style="left:242px;top:284px;width:148px;height:17px;background:#fff;"></div>
<div class="r" style="left:392px;top:285px;width:55px;height:15px;background:#f2f2f2;"></div>
<div class="r" style="left:44px;top:303px;width:196px;height:15px;background:#f2f2f2;"></div>
<div class="r" style="left:242px;top:302px;width:148px;height:17px;background:#fff;"></div>
<div class="r" style="left:392px;top:303px;width:55px;height:15px;background:#f2f2f2;"></div>
<div class="r" style="left:44px;top:321px;width:196px;height:15px;background:#f2f2f2;"></div>
<div class="r" style="left:242px;top:320px;width:148px;height:17px;background:#fff;"></div>
<div class="r" style="left:392px;top:321px;width:55px;height:15px;background:#f2f2f2;"></div>
<div class="r" style="left:44px;top:339px;width:196px;height:15px;background:#f2f2f2;"></div>
<div class="r" style="left:242px;top:338px;width:148px;height:17px;background:#fff;"></div>
<div class="r" style="left:392px;top:339px;width:55px;height:15px;background:#f2f2f2;"></div>
<div class="r" style="left:44px;top:357px;width:196px;height:16px;background:#f2f2f2;"></div>
<div class="r" style="left:242px;top:356px;width:148px;height:18px;background:#fff;"></div>
<div class="r" style="left:392px;top:357px;width:55px;height:16px;background:#f2f2f2;"></div>
<div class="r" style="left:44px;top:395px;width:196px;height:15px;background:#f2f2f2;"></div>
<div class="r" style="left:242px;top:394px;width:206px;height:17px;background:#fff;"></div>
<div class="r" style="left:44px;top:413px;width:196px;height:16px;background:#f2f2f2;"></div>
<div class="r" style="left:242px;top:412px;width:206px;height:18px;background:#fff;"></div>
<div class="r" style="left:44px;top:432px;width:196px;height:15px;background:#f2f2f2;"></div>
<div class="r" style="left:242px;top:431px;width:148px;height:17px;background:#fff;"></div>
<div class="r" style="left:392px;top:432px;width:55px;height:15px;background:#f2f2f2;"></div>
<div class="r" style="left:44px;top:450px;width:196px;height:15px;background:#f2f2f2;"></div>
<div class="r" style="left:242px;top:449px;width:148px;height:17px;background:#fff;"></div>
<div class="r" style="left:392px;top:450px;width:55px;height:15px;background:#f2f2f2;"></div>
<div class="r" style="left:44px;top:468px;width:196px;height:15px;background:#f2f2f2;"></div>
<div class="r" style="left:242px;top:467px;width:148px;height:17px;background:#fff;"></div>
<div class="r" style="left:392px;top:468px;width:55px;height:15px;background:#f2f2f2;"></div>
<div class="r" style="left:44px;top:505px;width:196px;height:15px;background:#f2f2f2;"></div>
<div class="r" style="left:242px;top:504px;width:206px;height:17px;background:#fff;"></div>
<div class="r" style="left:44px;top:523px;width:196px;height:16px;background:#f2f2f2;"></div>
<div class="r" style="left:242px;top:522px;width:206px;height:18px;background:#fff;"></div>
<div class="r" style="left:44px;top:542px;width:196px;height:16px;background:#f2f2f2;"></div>
<div class="r" style="left:242px;top:541px;width:148px;height:18px;background:#fff;"></div>
<div class="r" style="left:392px;top:542px;width:55px;height:16px;background:#f2f2f2;"></div>
<div class="r" style="left:44px;top:561px;width:196px;height:15px;background:#f2f2f2;"></div>
<div class="r" style="left:242px;top:560px;width:148px;height:17px;background:#fff;"></div>
<div class="r" style="left:392px;top:561px;width:55px;height:15px;background:#f2f2f2;"></div>
<div class="r" style="left:44px;top:598px;width:196px;height:15px;background:#f2f2f2;"></div>
<div class="r" style="left:242px;top:597px;width:206px;height:17px;background:#fff;"></div>
<div class="r" style="left:44px;top:616px;width:196px;height:15px;background:#f2f2f2;"></div>
<div class="r" style="left:242px;top:615px;width:206px;height:17px;background:#fff;"></div>
<div class="r" style="left:44px;top:634px;width:196px;height:15px;background:#f2f2f2;"></div>
<div class="r" style="left:242px;top:633px;width:148px;height:17px;background:#fff;"></div>
<div class="r" style="left:392px;top:634px;width:55px;height:15px;background:#f2f2f2;"></div>
<div class="r" style="left:44px;top:652px;width:196px;height:16px;background:#f2f2f2;"></div>
<div class="r" style="left:242px;top:651px;width:148px;height:18px;background:#fff;"></div>
<div class="r" style="left:392px;top:652px;width:55px;height:16px;background:#f2f2f2;"></div>
<div class="r" style="left:42px;top:301px;width:407px;height:1px;background:#000;"></div>
<div class="r" style="left:241px;top:283px;width:1px;height:19px;background:#000;"></div>
<div class="r" style="left:390px;top:283px;width:1px;height:19px;background:#000;"></div>
<div class="r" style="left:42px;top:319px;width:407px;height:1px;background:#000;"></div>
<div class="r" style="left:241px;top:301px;width:1px;height:19px;background:#000;"></div>
<div class="r" style="left:390px;top:301px;width:1px;height:19px;background:#000;"></div>
<div class="r" style="left:42px;top:337px;width:407px;height:1px;background:#000;"></div>
<div class="r" style="left:241px;top:319px;width:1px;height:19px;background:#000;"></div>
<div class="r" style="left:390px;top:319px;width:1px;height:19px;background:#000;"></div>
<div class="r" style="left:42px;top:355px;width:407px;height:1px;background:#000;"></div>
<div class="r" style="left:241px;top:337px;width:1px;height:19px;background:#000;"></div>
<div class="r" style="left:390px;top:337px;width:1px;height:19px;background:#000;"></div>
<div class="r" style="left:42px;top:374px;width:407px;height:1px;background:#000;"></div>
<div class="r" style="left:241px;top:355px;width:1px;height:20px;background:#000;"></div>
<div class="r" style="left:390px;top:355px;width:1px;height:20px;background:#000;"></div>
<div class="r" style="left:42px;top:411px;width:407px;height:1px;background:#000;"></div>
<div class="r" style="left:241px;top:393px;width:1px;height:19px;background:#000;"></div>
<div class="r" style="left:42px;top:430px;width:407px;height:1px;background:#000;"></div>
<div class="r" style="left:241px;top:411px;width:1px;height:20px;background:#000;"></div>
<div class="r" style="left:42px;top:448px;width:407px;height:1px;background:#000;"></div>
<div class="r" style="left:241px;top:430px;width:1px;height:19px;background:#000;"></div>
<div class="r" style="left:390px;top:430px;width:1px;height:19px;background:#000;"></div>
<div class="r" style="left:42px;top:466px;width:407px;height:1px;background:#000;"></div>
<div class="r" style="left:241px;top:448px;width:1px;height:19px;background:#000;"></div>
<div class="r" style="left:390px;top:448px;width:1px;height:19px;background:#000;"></div>
<div class="r" style="left:42px;top:484px;width:407px;height:1px;background:#000;"></div>
<div class="r" style="left:241px;top:466px;width:1px;height:19px;background:#000;"></div>
<div class="r" style="left:390px;top:466px;width:1px;height:19px;background:#000;"></div>
<div class="r" style="left:42px;top:521px;width:407px;height:1px;background:#000;"></div>
<div class="r" style="left:241px;top:503px;width:1px;height:19px;background:#000;"></div>
<div class="r" style="left:42px;top:540px;width:407px;height:1px;background:#000;"></div>
<div class="r" style="left:241px;top:521px;width:1px;height:20px;background:#000;"></div>
<div class="r" style="left:42px;top:559px;width:407px;height:1px;background:#000;"></div>
<div class="r" style="left:241px;top:540px;width:1px;height:20px;background:#000;"></div>
<div class="r" style="left:390px;top:540px;width:1px;height:20px;background:#000;"></div>
<div class="r" style="left:42px;top:577px;width:407px;height:1px;background:#000;"></div>
<div class="r" style="left:241px;top:559px;width:1px;height:19px;background:#000;"></div>
<div class="r" style="left:390px;top:559px;width:1px;height:19px;background:#000;"></div>
<div class="r" style="left:42px;top:614px;width:407px;height:1px;background:#000;"></div>
<div class="r" style="left:241px;top:596px;width:1px;height:19px;background:#000;"></div>
<div class="r" style="left:42px;top:632px;width:407px;height:1px;background:#000;"></div>
<div class="r" style="left:241px;top:614px;width:1px;height:19px;background:#000;"></div>
<div class="r" style="left:42px;top:650px;width:407px;height:1px;background:#000;"></div>
<div class="r" style="left:241px;top:632px;width:1px;height:19px;background:#000;"></div>
<div class="r" style="left:390px;top:632px;width:1px;height:19px;background:#000;"></div>
<div class="r" style="left:42px;top:669px;width:407px;height:1px;background:#000;"></div>
<div class="r" style="left:241px;top:650px;width:1px;height:20px;background:#000;"></div>
<div class="r" style="left:390px;top:650px;width:1px;height:20px;background:#000;"></div>
<div class="r" style="left:41px;top:263px;width:408px;height:2px;background:#000;"></div>
<div class="r" style="left:41px;top:282px;width:408px;height:2px;background:#000;"></div>
<div class="r" style="left:41px;top:373px;width:408px;height:2px;background:#000;"></div>
<div class="r" style="left:41px;top:392px;width:408px;height:2px;background:#000;"></div>
<div class="r" style="left:41px;top:483px;width:408px;height:2px;background:#000;"></div>
<div class="r" style="left:41px;top:502px;width:408px;height:2px;background:#000;"></div>
<div class="r" style="left:41px;top:576px;width:408px;height:2px;background:#000;"></div>
<div class="r" style="left:41px;top:595px;width:408px;height:2px;background:#000;"></div>
<div class="r" style="left:41px;top:222px;width:408px;height:2px;background:#000;"></div>
<div class="r" style="left:41px;top:263px;width:408px;height:2px;background:#000;"></div>
<div class="r" style="left:41px;top:668px;width:408px;height:2px;background:#000;"></div>
<div class="r" style="left:41px;top:373px;width:408px;height:2px;background:#000;"></div>
<div class="r" style="left:41px;top:483px;width:408px;height:2px;background:#000;"></div>
<div class="r" style="left:41px;top:576px;width:408px;height:2px;background:#000;"></div>
<div class="r" style="left:41px;top:222px;width:2px;height:448px;background:#000;"></div>
<div class="r" style="left:447px;top:222px;width:2px;height:448px;background:#000;"></div>
<svg class="s" style="left:236px;top:284px;" width="5" height="5" viewBox="0 0 5 5"><path d="M0 0H5V5Z" fill="#f00"/></svg>
<div class="t k" style="left:44.50px;top:286.75px;font-size:12.5px;line-height:12.5px;color:#000;">Largura (a)</div>
<div class="t k" style="left:363.17px;top:286.75px;font-size:12.5px;line-height:12.5px;color:#000;">5,00</div>
<div class="t k" style="left:392.50px;top:286.75px;font-size:12.5px;line-height:12.5px;color:#000;">m</div>
<svg class="s" style="left:236px;top:302px;" width="5" height="5" viewBox="0 0 5 5"><path d="M0 0H5V5Z" fill="#f00"/></svg>
<div class="t k" style="left:44.50px;top:304.75px;font-size:12.5px;line-height:12.5px;color:#000;">Comprimento (b)</div>
<div class="t k" style="left:356.22px;top:304.75px;font-size:12.5px;line-height:12.5px;color:#000;">15,00</div>
<div class="t k" style="left:392.50px;top:304.75px;font-size:12.5px;line-height:12.5px;color:#000;">m</div>
<svg class="s" style="left:236px;top:320px;" width="5" height="5" viewBox="0 0 5 5"><path d="M0 0H5V5Z" fill="#f00"/></svg>
<div class="t k" style="left:44.50px;top:322.75px;font-size:12.5px;line-height:12.5px;color:#000;">Altura (h)</div>
<div class="t k" style="left:363.17px;top:322.75px;font-size:12.5px;line-height:12.5px;color:#000;">1,50</div>
<div class="t k" style="left:392.50px;top:322.75px;font-size:12.5px;line-height:12.5px;color:#000;">m</div>
<svg class="s" style="left:236px;top:338px;" width="5" height="5" viewBox="0 0 5 5"><path d="M0 0H5V5Z" fill="#f00"/></svg>
<div class="t k" style="left:44.50px;top:340.75px;font-size:12.5px;line-height:12.5px;color:#000;">Intensidade pluviométrica</div>
<div class="t k" style="left:366.64px;top:340.75px;font-size:12.5px;line-height:12.5px;color:#000;">200</div>
<div class="t k" style="left:392.50px;top:340.75px;font-size:12.5px;line-height:12.5px;color:#000;">mm/h</div>
<svg class="s" style="left:236px;top:356px;" width="5" height="5" viewBox="0 0 5 5"><path d="M0 0H5V5Z" fill="#f00"/></svg>
<div class="t k" style="left:44.50px;top:359.75px;font-size:12.5px;line-height:12.5px;color:#000;">Área de contribuição adicional</div>
<div class="t k" style="left:363.17px;top:359.75px;font-size:12.5px;line-height:12.5px;color:#000;">0,00</div>
<div class="t k" style="left:392.50px;top:359.75px;font-size:12.5px;line-height:12.5px;color:#000;">m²</div>
<svg class="s" style="left:236px;top:394px;" width="5" height="5" viewBox="0 0 5 5"><path d="M0 0H5V5Z" fill="#f00"/></svg>
<div class="t k" style="left:44.50px;top:396.75px;font-size:12.5px;line-height:12.5px;color:#000;">Material</div>
<div class="t k" style="left:334.23px;top:396.75px;font-size:12.5px;line-height:12.5px;color:#000;">Aço</div>
<svg class="s" style="left:236px;top:412px;" width="5" height="5" viewBox="0 0 5 5"><path d="M0 0H5V5Z" fill="#f00"/></svg>
<div class="t k" style="left:44.50px;top:415.75px;font-size:12.5px;line-height:12.5px;color:#000;">Tipo de seção</div>
<div class="t k" style="left:310.62px;top:415.75px;font-size:12.5px;line-height:12.5px;color:#000;">Semicircular</div>
<svg class="s" style="left:236px;top:431px;" width="5" height="5" viewBox="0 0 5 5"><path d="M0 0H5V5Z" fill="#f00"/></svg>
<div class="t k" style="left:44.50px;top:433.75px;font-size:12.5px;line-height:12.5px;color:#000;">Inclinação</div>
<div class="t k" style="left:370.12px;top:433.75px;font-size:12.5px;line-height:12.5px;color:#000;">1,0</div>
<div class="t k" style="left:392.50px;top:433.75px;font-size:12.5px;line-height:12.5px;color:#000;">%</div>
<svg class="s" style="left:236px;top:449px;" width="5" height="5" viewBox="0 0 5 5"><path d="M0 0H5V5Z" fill="#f00"/></svg>
<div class="t k" style="left:44.50px;top:451.75px;font-size:12.5px;line-height:12.5px;color:#000;">Altura da área molhada</div>
<div class="t k" style="left:363.17px;top:451.75px;font-size:12.5px;line-height:12.5px;color:#000;">7,50</div>
<div class="t k" style="left:392.50px;top:451.75px;font-size:12.5px;line-height:12.5px;color:#000;">cm</div>
<svg class="s" style="left:236px;top:467px;" width="5" height="5" viewBox="0 0 5 5"><path d="M0 0H5V5Z" fill="#f00"/></svg>
<div class="t k" style="left:44.50px;top:469.75px;font-size:12.5px;line-height:12.5px;color:#000;">Diâmetro interno</div>
<div class="t k" style="left:356.22px;top:469.75px;font-size:12.5px;line-height:12.5px;color:#000;">25,00</div>
<div class="t k" style="left:392.50px;top:469.75px;font-size:12.5px;line-height:12.5px;color:#000;">cm</div>
<svg class="s" style="left:236px;top:504px;" width="5" height="5" viewBox="0 0 5 5"><path d="M0 0H5V5Z" fill="#f00"/></svg>
<div class="t k" style="left:44.50px;top:506.75px;font-size:12.5px;line-height:12.5px;color:#000;">Qtd. De Condutores</div>
<div class="t k" style="left:341.52px;top:506.75px;font-size:12.5px;line-height:12.5px;color:#000;">1</div>
<svg class="s" style="left:236px;top:522px;" width="5" height="5" viewBox="0 0 5 5"><path d="M0 0H5V5Z" fill="#f00"/></svg>
<div class="t k" style="left:44.50px;top:525.75px;font-size:12.5px;line-height:12.5px;color:#000;">Material</div>
<div class="t k" style="left:323.12px;top:525.75px;font-size:12.5px;line-height:12.5px;color:#000;">Plástico</div>
<svg class="s" style="left:236px;top:541px;" width="5" height="5" viewBox="0 0 5 5"><path d="M0 0H5V5Z" fill="#f00"/></svg>
<div class="t k" style="left:44.50px;top:544.75px;font-size:12.5px;line-height:12.5px;color:#000;">Diâmetro interno</div>
<div class="t k" style="left:349.27px;top:544.75px;font-size:12.5px;line-height:12.5px;color:#000;">100,00</div>
<div class="t k" style="left:392.50px;top:544.75px;font-size:12.5px;line-height:12.5px;color:#000;">mm</div>
<svg class="s" style="left:236px;top:560px;" width="5" height="5" viewBox="0 0 5 5"><path d="M0 0H5V5Z" fill="#f00"/></svg>
<div class="t k" style="left:44.50px;top:562.75px;font-size:12.5px;line-height:12.5px;color:#000;">Taxa de ocupação</div>
<div class="t k" style="left:356.22px;top:562.75px;font-size:12.5px;line-height:12.5px;color:#000;">25,00</div>
<div class="t k" style="left:392.50px;top:562.75px;font-size:12.5px;line-height:12.5px;color:#000;">%</div>
<svg class="s" style="left:236px;top:597px;" width="5" height="5" viewBox="0 0 5 5"><path d="M0 0H5V5Z" fill="#f00"/></svg>
<div class="t k" style="left:44.50px;top:599.75px;font-size:12.5px;line-height:12.5px;color:#000;">Qtd. De Condutores</div>
<div class="t k" style="left:341.52px;top:599.75px;font-size:12.5px;line-height:12.5px;color:#000;">1</div>
<svg class="s" style="left:236px;top:615px;" width="5" height="5" viewBox="0 0 5 5"><path d="M0 0H5V5Z" fill="#f00"/></svg>
<div class="t k" style="left:44.50px;top:617.75px;font-size:12.5px;line-height:12.5px;color:#000;">Material</div>
<div class="t k" style="left:323.12px;top:617.75px;font-size:12.5px;line-height:12.5px;color:#000;">Plástico</div>
<svg class="s" style="left:236px;top:633px;" width="5" height="5" viewBox="0 0 5 5"><path d="M0 0H5V5Z" fill="#f00"/></svg>
<div class="t k" style="left:44.50px;top:635.75px;font-size:12.5px;line-height:12.5px;color:#000;">Diâmetro interno</div>
<div class="t k" style="left:349.27px;top:635.75px;font-size:12.5px;line-height:12.5px;color:#000;">100,00</div>
<div class="t k" style="left:392.50px;top:635.75px;font-size:12.5px;line-height:12.5px;color:#000;">mm</div>
<svg class="s" style="left:236px;top:651px;" width="5" height="5" viewBox="0 0 5 5"><path d="M0 0H5V5Z" fill="#f00"/></svg>
<div class="t k" style="left:44.50px;top:654.75px;font-size:12.5px;line-height:12.5px;color:#000;">Inclinação</div>
<div class="t k" style="left:370.12px;top:654.75px;font-size:12.5px;line-height:12.5px;color:#000;">1,0</div>
<div class="t k" style="left:392.50px;top:654.75px;font-size:12.5px;line-height:12.5px;color:#000;">%</div>
<div class="t" style="left:221.06px;top:268.00px;font-size:13px;line-height:13px;color:#000;font-weight:bold;">Telhado</div>
<div class="t" style="left:227.80px;top:378.00px;font-size:13px;line-height:13px;color:#000;font-weight:bold;">Calha</div>
<div class="t" style="left:191.69px;top:488.00px;font-size:13px;line-height:13px;color:#000;font-weight:bold;">Condutor vertical</div>
<div class="t" style="left:183.40px;top:581.00px;font-size:13px;line-height:13px;color:#000;font-weight:bold;">Condutor horizontal</div>
<div class="r" style="left:485px;top:431px;width:457px;height:35px;background:#5b9bd5;"></div>
<div class="t" style="left:656.50px;top:441.00px;font-size:15px;line-height:15px;color:#000;font-weight:bold;transform:scaleX(1.0360);transform-origin:0 0;">Saída de dados</div>
<div class="r" style="left:486px;top:468px;width:317px;height:15px;background:#f2f2f2;"></div>
<div class="r" style="left:805px;top:467px;width:79px;height:17px;background:#fff;"></div>
<div class="r" style="left:886px;top:468px;width:55px;height:15px;background:#f2f2f2;"></div>
<div class="r" style="left:486px;top:486px;width:317px;height:16px;background:#f2f2f2;"></div>
<div class="r" style="left:805px;top:485px;width:79px;height:18px;background:#fff;"></div>
<div class="r" style="left:886px;top:486px;width:55px;height:16px;background:#f2f2f2;"></div>
<div class="r" style="left:486px;top:505px;width:317px;height:15px;background:#f2f2f2;"></div>
<div class="r" style="left:805px;top:504px;width:79px;height:17px;background:#fff;"></div>
<div class="r" style="left:886px;top:505px;width:55px;height:15px;background:#f2f2f2;"></div>
<div class="r" style="left:486px;top:523px;width:317px;height:16px;background:#f2f2f2;"></div>
<div class="r" style="left:805px;top:522px;width:79px;height:18px;background:#fff;"></div>
<div class="r" style="left:886px;top:523px;width:55px;height:16px;background:#f2f2f2;"></div>
<div class="r" style="left:484px;top:484px;width:459px;height:1px;background:#000;"></div>
<div class="r" style="left:804px;top:466px;width:1px;height:19px;background:#000;"></div>
<div class="r" style="left:884px;top:466px;width:1px;height:19px;background:#000;"></div>
<div class="r" style="left:484px;top:503px;width:459px;height:1px;background:#000;"></div>
<div class="r" style="left:804px;top:484px;width:1px;height:20px;background:#000;"></div>
<div class="r" style="left:884px;top:484px;width:1px;height:20px;background:#000;"></div>
<div class="r" style="left:484px;top:521px;width:459px;height:1px;background:#000;"></div>
<div class="r" style="left:804px;top:503px;width:1px;height:19px;background:#000;"></div>
<div class="r" style="left:884px;top:503px;width:1px;height:19px;background:#000;"></div>
<div class="r" style="left:484px;top:540px;width:459px;height:1px;background:#000;"></div>
<div class="r" style="left:804px;top:521px;width:1px;height:20px;background:#000;"></div>
<div class="r" style="left:884px;top:521px;width:1px;height:20px;background:#000;"></div>
<div class="r" style="left:483px;top:429px;width:460px;height:2px;background:#000;"></div>
<div class="r" style="left:483px;top:465px;width:460px;height:2px;background:#000;"></div>
<div class="r" style="left:483px;top:539px;width:460px;height:2px;background:#000;"></div>
<div class="r" style="left:483px;top:429px;width:2px;height:112px;background:#000;"></div>
<div class="r" style="left:941px;top:429px;width:2px;height:112px;background:#000;"></div>
<svg class="s" style="left:799px;top:467px;" width="5" height="5" viewBox="0 0 5 5"><path d="M0 0H5V5Z" fill="#f00"/></svg>
<div class="t k" style="left:486.50px;top:469.75px;font-size:12.5px;line-height:12.5px;color:#000;transform:scaleX(0.9800);transform-origin:0 0;">Vazão do telhado (Qt)</div>
<div class="t k" style="left:843.27px;top:469.75px;font-size:12.5px;line-height:12.5px;color:#000;">287,50</div>
<div class="t k" style="left:886.50px;top:469.75px;font-size:12.5px;line-height:12.5px;color:#000;">L/min</div>
<svg class="s" style="left:799px;top:485px;" width="5" height="5" viewBox="0 0 5 5"><path d="M0 0H5V5Z" fill="#f00"/></svg>
<div class="t k" style="left:486.50px;top:488.75px;font-size:12.5px;line-height:12.5px;color:#000;transform:scaleX(0.9800);transform-origin:0 0;">Capacidade de vazão da calha (Qc)</div>
<div class="t k" style="left:843.27px;top:488.75px;font-size:12.5px;line-height:12.5px;color:#000;">825,78</div>
<div class="t k" style="left:886.50px;top:488.75px;font-size:12.5px;line-height:12.5px;color:#000;">L/min</div>
<svg class="s" style="left:799px;top:504px;" width="5" height="5" viewBox="0 0 5 5"><path d="M0 0H5V5Z" fill="#f00"/></svg>
<div class="t k" style="left:486.50px;top:506.75px;font-size:12.5px;line-height:12.5px;color:#000;transform:scaleX(0.9800);transform-origin:0 0;">Capacidade de vazão do condutor vertical (Qv)</div>
<div class="t k" style="left:843.27px;top:506.75px;font-size:12.5px;line-height:12.5px;color:#000;">363,37</div>
<div class="t k" style="left:886.50px;top:506.75px;font-size:12.5px;line-height:12.5px;color:#000;">L/min</div>
<svg class="s" style="left:799px;top:522px;" width="5" height="5" viewBox="0 0 5 5"><path d="M0 0H5V5Z" fill="#f00"/></svg>
<div class="t k" style="left:486.50px;top:525.75px;font-size:12.5px;line-height:12.5px;color:#000;transform:scaleX(0.9800);transform-origin:0 0;">Capacidade de vazão do condutor horizontal (Qh)</div>
<div class="t k" style="left:843.27px;top:525.75px;font-size:12.5px;line-height:12.5px;color:#000;">287,12</div>
<div class="t k" style="left:886.50px;top:525.75px;font-size:12.5px;line-height:12.5px;color:#000;">L/min</div>
<div class="r" style="left:485px;top:578px;width:457px;height:36px;background:#5b9bd5;"></div>
<div class="t" style="left:668.30px;top:589.20px;font-size:15px;line-height:15px;color:#000;font-weight:bold;transform:scaleX(1.0324);transform-origin:0 0;">Verificações</div>
<div class="r" style="left:485px;top:615px;width:319px;height:17px;background:#fff;"></div>
<div class="r" style="left:806px;top:616px;width:135px;height:15px;background:#f2f2f2;"></div>
<div class="r" style="left:485px;top:633px;width:319px;height:17px;background:#fff;"></div>
<div class="r" style="left:806px;top:634px;width:135px;height:15px;background:#f2f2f2;"></div>
<div class="r" style="left:485px;top:651px;width:319px;height:18px;background:#ffc7ce;"></div>
<div class="r" style="left:806px;top:652px;width:135px;height:16px;background:#f2f2f2;"></div>
<div class="r" style="left:484px;top:632px;width:459px;height:1px;background:#000;"></div>
<div class="r" style="left:804px;top:614px;width:1px;height:19px;background:#000;"></div>
<div class="r" style="left:484px;top:650px;width:459px;height:1px;background:#000;"></div>
<div class="r" style="left:804px;top:632px;width:1px;height:19px;background:#000;"></div>
<div class="r" style="left:484px;top:669px;width:459px;height:1px;background:#000;"></div>
<div class="r" style="left:804px;top:650px;width:1px;height:20px;background:#000;"></div>
<div class="r" style="left:483px;top:576px;width:460px;height:2px;background:#000;"></div>
<div class="r" style="left:483px;top:613px;width:460px;height:2px;background:#000;"></div>
<div class="r" style="left:483px;top:668px;width:460px;height:2px;background:#000;"></div>
<div class="r" style="left:483px;top:576px;width:2px;height:94px;background:#000;"></div>
<div class="r" style="left:941px;top:576px;width:2px;height:94px;background:#000;"></div>
<svg class="s" style="left:937px;top:615px;" width="5" height="5" viewBox="0 0 5 5"><path d="M0 0H5V5Z" fill="#f00"/></svg>
<div class="t k" style="left:566.81px;top:617.75px;font-size:12.5px;line-height:12.5px;color:#000;transform:scaleX(0.9850);transform-origin:0 0;">OK! A calha suporta a vazão</div>
<div class="t k" style="left:852.01px;top:617.75px;font-size:12.5px;line-height:12.5px;color:#000;">Qc ≥ Qt</div>
<svg class="s" style="left:937px;top:633px;" width="5" height="5" viewBox="0 0 5 5"><path d="M0 0H5V5Z" fill="#f00"/></svg>
<div class="t k" style="left:535.00px;top:635.75px;font-size:12.5px;line-height:12.5px;color:#000;transform:scaleX(0.9850);transform-origin:0 0;">OK! O condutor vertical suporta a vazão</div>
<div class="t k" style="left:852.01px;top:635.75px;font-size:12.5px;line-height:12.5px;color:#000;">Qv ≥ Qt</div>
<svg class="s" style="left:937px;top:651px;" width="5" height="5" viewBox="0 0 5 5"><path d="M0 0H5V5Z" fill="#f00"/></svg>
<div class="t k" style="left:518.57px;top:654.75px;font-size:12.5px;line-height:12.5px;color:#9c0006;transform:scaleX(0.9850);transform-origin:0 0;">Não OK! Redimensionar o condutor horizontal</div>
<div class="t k" style="left:851.44px;top:654.75px;font-size:12.5px;line-height:12.5px;color:#000;">Qh &lt; Qt</div>
<div class="r" style="left:240px;top:410px;width:210px;height:2px;background:#217346;"></div>
<div class="r" style="left:240px;top:430px;width:210px;height:2px;background:#217346;"></div>
<div class="r" style="left:240px;top:410px;width:2px;height:22px;background:#217346;"></div>
<div class="r" style="left:447px;top:410px;width:2px;height:22px;background:#217346;"></div>
<div class="r" style="left:446px;top:428px;width:5px;height:5px;background:#217346;box-shadow:0 0 0 1px #fff;"></div>
<div class="r" style="left:449px;top:412px;width:17px;height:17px;background:linear-gradient(#fff,#eef0f4);box-sizing:border-box;border:1px solid #b8bcc4;"></div>
<svg class="s" style="left:454px;top:419px;" width="8" height="5" viewBox="0 0 8 5"><path d="M0 0H7.5L3.75 4Z" fill="#666"/></svg>
<div class="r" style="left:485px;top:241px;width:457px;height:92px;background:#5b9bd5;box-sizing:border-box;border:1px solid #41719c;border-radius:14px;"></div>
<div class="t" style="left:547.20px;top:272.00px;font-size:32px;line-height:32px;color:#fff;font-weight:bold;">IMPRIMIR MEMORIAL</div>
<div class="r" style="left:516px;top:359px;width:395px;height:43px;background:#5b9bd5;box-sizing:border-box;border:1px solid #41719c;border-radius:7px;"></div>
<div class="t" style="left:580.30px;top:371.45px;font-size:19.5px;line-height:19.5px;color:#fff;font-weight:bold;transform:scaleX(0.9373);transform-origin:0 0;">LIMPAR ENTRADA DE DADOS</div>
<div class="r" style="left:0px;top:678px;width:1366px;height:28px;background:#f3f3f3;"></div>
<div class="r" style="left:0px;top:678px;width:1366px;height:1px;background:#c6c6c6;"></div>
<div class="r" style="left:1344px;top:205px;width:1px;height:473px;background:#ababab;"></div>
<div class="r" style="left:100px;top:678px;width:151px;height:27px;background:#fff;"></div>
<div class="r" style="left:100px;top:678px;width:1px;height:24px;background:#ababab;"></div>
<div class="r" style="left:250px;top:678px;width:1px;height:24px;background:#ababab;"></div>
<div class="r" style="left:100px;top:701px;width:151px;height:2px;background:#217346;"></div>
<div class="t" style="left:112.70px;top:685.00px;font-size:13px;line-height:13px;color:#217346;font-weight:bold;transform:scaleX(0.9629);transform-origin:0 0;">Calhas e Condutores</div>
<div class="t" style="left:265.20px;top:685.00px;font-size:13px;line-height:13px;color:#444;transform:scaleX(1.0152);transform-origin:0 0;">Memorial de Cálculo</div>
<div class="r" style="left:400px;top:682px;width:1px;height:20px;background:#c6c6c6;"></div>
<svg class="s" style="left:433px;top:683px;" width="18" height="18" viewBox="0 0 18 18"><circle cx="8.5" cy="8.5" r="7.5" fill="none" stroke="#777" stroke-width="1.3"/><path d="M8.5 4.5V12.5M4.5 8.5H12.5" stroke="#777" stroke-width="1.6"/></svg>
<svg class="s" style="left:26px;top:688px;" width="6" height="8" viewBox="0 0 6 8"><path d="M5.5 0V7.5L0.5 3.75Z" fill="#c0c0c0"/></svg>
<svg class="s" style="left:56px;top:688px;" width="6" height="8" viewBox="0 0 6 8"><path d="M0.5 0V7.5L5.5 3.75Z" fill="#c0c0c0"/></svg>
<div class="r" style="left:819px;top:687px;width:2px;height:2px;background:#a8a8a8;"></div>
<div class="r" style="left:819px;top:691px;width:2px;height:2px;background:#a8a8a8;"></div>
<div class="r" style="left:819px;top:695px;width:2px;height:2px;background:#a8a8a8;"></div>
<div class="r" style="left:836px;top:685px;width:509px;height:15px;background:#e6e6e6;"></div>
<div class="r" style="left:836px;top:685px;width:237px;height:15px;background:#fff;box-sizing:border-box;border:1px solid #ababab;"></div>
<div class="r" style="left:851px;top:685px;width:1px;height:15px;background:#ababab;"></div>
<svg class="s" style="left:841px;top:688px;" width="6" height="9" viewBox="0 0 6 9"><path d="M5 0.5V8.5L0.5 4.5Z" fill="#555"/></svg>
<div class="r" style="left:1330px;top:685px;width:15px;height:15px;background:#fff;box-sizing:border-box;border:1px solid #ababab;"></div>
<svg class="s" style="left:1335px;top:688px;" width="6" height="9" viewBox="0 0 6 9"><path d="M0.5 0.5V8.5L5 4.5Z" fill="#555"/></svg>
<div class="r" style="left:1345px;top:189px;width:21px;height:489px;background:#fff;"></div>
<div class="r" style="left:1348px;top:206px;width:15px;height:472px;background:#e8e8e8;"></div>
<div class="r" style="left:1348px;top:191px;width:15px;height:15px;background:#fff;box-sizing:border-box;border:1px solid #ababab;"></div>
<svg class="s" style="left:1352px;top:197px;" width="8" height="5" viewBox="0 0 8 5"><path d="M0 4.5H7.5L3.75 0Z" fill="#555"/></svg>
<div class="r" style="left:1348px;top:206px;width:15px;height:21px;background:#fff;box-sizing:border-box;border:1px solid #ababab;"></div>
<div class="r" style="left:1348px;top:663px;width:15px;height:15px;background:#fff;box-sizing:border-box;border:1px solid #ababab;"></div>
<svg class="s" style="left:1352px;top:668px;" width="8" height="5" viewBox="0 0 8 5"><path d="M0 0H7.5L3.75 4.5Z" fill="#555"/></svg>
<div class="r" style="left:0px;top:706px;width:1366px;height:22px;background:#217346;"></div>
<div class="t" style="left:6.60px;top:711.20px;font-size:12px;line-height:12px;color:#fff;transform:scaleX(0.8901);transform-origin:0 0;">PRONTO</div>
<svg class="s" style="left:71px;top:709px;" width="14" height="15" viewBox="0 0 14 15"><circle cx="3.5" cy="3.5" r="3" fill="#fff"/><rect x="1.5" y="5.5" width="12" height="9" fill="none" stroke="#fff"/><rect x="5" y="1.5" width="8.5" height="3" fill="#fff"/><path d="M3.5 8H5.5M7 8H9M10.5 8H12.5M3.5 10.5H5.5M7 10.5H9M10.5 10.5H12.5M3.5 13H12.5" stroke="#fff"/></svg>
<div class="r" style="left:1080px;top:706px;width:38px;height:22px;background:#185c37;"></div>
<svg class="s" style="left:1091px;top:709px;" width="15" height="15" viewBox="0 0 15 15"><path d="M1.5 1.5H13.5V13.5H1.5ZM5.5 1.5V13.5M9.5 1.5V13.5M1.5 5.5H13.5M1.5 9.5H13.5" fill="none" stroke="#fff"/></svg>
<svg class="s" style="left:1129px;top:709px;" width="16" height="15" viewBox="0 0 16 15"><rect x="0.5" y="0.5" width="14" height="13" fill="none" stroke="#fff"/><rect x="3.5" y="3.5" width="8" height="7" fill="none" stroke="#fff"/><path d="M5 5.5H10M5 7.5H10M5 9H10" stroke="#fff" stroke-width="0.8"/></svg>
<svg class="s" style="left:1168px;top:709px;" width="15" height="15" viewBox="0 0 15 15"><rect x="0.5" y="0.5" width="13" height="13" fill="none" stroke="#fff"/><rect x="3" y="1" width="3" height="7" fill="#fff"/><rect x="7" y="1" width="3" height="7" fill="#fff"/></svg>
<div class="r" style="left:1199px;top:715px;width:6px;height:2px;background:#fff;"></div>
<div class="r" style="left:1209px;top:715px;width:100px;height:1px;background:#fff;"></div>
<div class="r" style="left:1252px;top:711px;width:5px;height:11px;background:#fff;"></div>
<div class="r" style="left:1259px;top:713px;width:1px;height:6px;background:#fff;"></div>
<div class="r" style="left:1313px;top:715px;width:9px;height:2px;background:#fff;"></div>
<div class="r" style="left:1316.5px;top:711.5px;width:2px;height:9px;background:#fff;"></div>
<div class="t" style="left:1335.40px;top:711.20px;font-size:12px;line-height:12px;color:#fff;transform:scaleX(0.8993);transform-origin:0 0;">90%</div>
<div class="r" style="left:0px;top:728px;width:1366px;height:40px;background:linear-gradient(#1a1f28 0px,#0d1118 3px,#0b0f16 40px);"></div>
<div class="r" style="left:0px;top:728px;width:1366px;height:1px;background:#5c6670;"></div>
<div class="r" style="left:617px;top:729px;width:59px;height:37px;background:linear-gradient(#9a9a9a,#6e6e6e 50%,#5a5a5a);box-sizing:border-box;border:1px solid #b8b8b8;border-radius:3px;"></div>
<div class="r" style="left:1352px;top:729px;width:14px;height:39px;background:linear-gradient(90deg,#3a3f46,#1c2028);box-sizing:border-box;border-left:1px solid #6a7078;"></div>
<div class="t" style="left:1125.70px;top:740.00px;font-size:12px;line-height:12px;color:#fff;transform:scaleX(0.8673);transform-origin:0 0;">PT</div>
<svg class="s" style="left:1155px;top:746px;" width="9" height="6" viewBox="0 0 9 6"><path d="M0.5 5.5H8.5L4.5 0.5Z" fill="#fff"/></svg>
<div class="t" style="left:1297.70px;top:735.00px;font-size:12px;line-height:12px;color:#fff;transform:scaleX(0.9091);transform-origin:0 0;">01:40</div>
<div class="t" style="left:1282.00px;top:752.00px;font-size:12px;line-height:12px;color:#fff;transform:scaleX(0.9491);transform-origin:0 0;">14/01/2024</div>
<svg class="s" style="left:990px;top:240px;" width="350" height="260" viewBox="0 0 350 260"><g transform="translate(-990,-240)"><path d="M1022.5 262.5H1226M1022.5 257V269M1225.5 257V313" stroke="#333" stroke-width="1"/><path d="M1019 260L1026 264M1223 260L1229 264" stroke="#333" stroke-width="0.8"/><path d="M1008.5 273.5V325.5M1003 273.5H1020M1003 325.5H1020" stroke="#333" stroke-width="1"/><path d="M1006 271L1011 276M1006 323L1011 328" stroke="#333" stroke-width="0.8"/><path d="M1023 281 L1210 321.5 V439 H1023Z" fill="#c7c7c9"/><path d="M1023.5 276V439M1209.5 320V439" stroke="#444" stroke-width="1"/><rect x="1082.5" y="356.5" width="68" height="45" fill="#acdcf6" stroke="#333" stroke-width="2"/><path d="M1116.5 356V402" stroke="#333" stroke-width="2"/><rect x="1000.5" y="439" width="291.5" height="25" fill="#cd6829"/><path d="M1000 439.5H1292M1000 463.5H1292M1000.5 436V466M1291.5 436V466" stroke="#333" stroke-width="1"/><path d="M1023 277.5 L1226 321.0 L1226 324.5 L1023 281.0Z" fill="#a9521b" stroke="#3a1806" stroke-width="0.9"/><path d="M1023.0 274.5 L1041.5 277.3 L1041.5 282.0 L1023.0 278.0Z" fill="#e57b32" stroke="#3a1806" stroke-width="0.9"/><path d="M1041.5 278.5 L1060.0 281.2 L1060.0 285.9 L1041.5 282.0Z" fill="#e57b32" stroke="#3a1806" stroke-width="0.9"/><path d="M1060.0 282.4 L1078.5 285.2 L1078.5 289.9 L1060.0 285.9Z" fill="#e57b32" stroke="#3a1806" stroke-width="0.9"/><path d="M1078.5 286.4 L1097.0 289.2 L1097.0 293.9 L1078.5 289.9Z" fill="#e57b32" stroke="#3a1806" stroke-width="0.9"/><path d="M1097.0 290.4 L1115.5 293.1 L1115.5 297.8 L1097.0 293.9Z" fill="#e57b32" stroke="#3a1806" stroke-width="0.9"/><path d="M1115.5 294.3 L1134.0 297.1 L1134.0 301.8 L1115.5 297.8Z" fill="#e57b32" stroke="#3a1806" stroke-width="0.9"/><path d="M1134.0 298.3 L1152.5 301.1 L1152.5 305.8 L1134.0 301.8Z" fill="#e57b32" stroke="#3a1806" stroke-width="0.9"/><path d="M1152.5 302.2 L1171.0 305.0 L1171.0 309.7 L1152.5 305.8Z" fill="#e57b32" stroke="#3a1806" stroke-width="0.9"/><path d="M1171.0 306.2 L1189.5 309.0 L1189.5 313.7 L1171.0 309.7Z" fill="#e57b32" stroke="#3a1806" stroke-width="0.9"/><path d="M1189.5 310.2 L1208.0 313.0 L1208.0 317.6 L1189.5 313.7Z" fill="#e57b32" stroke="#3a1806" stroke-width="0.9"/><path d="M1208.0 314.1 L1226.5 316.9 L1226.5 321.6 L1208.0 317.6Z" fill="#e57b32" stroke="#3a1806" stroke-width="0.9"/><path d="M1030.0 282.7 L1033.0 282.7 L1032.0 288.7 L1029.0 288.7Z" fill="#b85a1e" stroke="#3a1a08" stroke-width="0.6"/><path d="M1086.5 294.8 L1089.5 294.8 L1088.5 300.8 L1085.5 300.8Z" fill="#b85a1e" stroke="#3a1a08" stroke-width="0.6"/><path d="M1143.0 306.9 L1146.0 306.9 L1145.0 312.9 L1142.0 312.9Z" fill="#b85a1e" stroke="#3a1a08" stroke-width="0.6"/><path d="M1200.0 319.1 L1203.0 319.1 L1202.0 325.1 L1199.0 325.1Z" fill="#b85a1e" stroke="#3a1a08" stroke-width="0.6"/><rect x="1224" y="320" width="2.5" height="12" fill="#6a3010"/><path d="M1225 324.5 A7 7 0 0 0 1239 324.5" fill="none" stroke="#111" stroke-width="1.6"/><path d="M1232 332 V336 Q1232 339 1229 342 L1215 356 Q1212.5 358.5 1212.5 362 V445 Q1212.5 451.5 1218.5 451.5 H1226" fill="none" stroke="#333" stroke-width="6"/><path d="M1232 332 V336 Q1232 339 1229 342 L1215 356 Q1212.5 358.5 1212.5 362 V445 Q1212.5 451.5 1218.5 451.5 H1226" fill="none" stroke="#fff" stroke-width="3.6"/><path d="M1229 333H1235M1222.5 344.5L1226.5 348.5M1221 346L1225 350M1215 350.5L1219 354.5M1213.5 352L1217.5 356M1209.5 365H1215.5" stroke="#333" stroke-width="1"/><rect x="1246" y="449" width="46" height="5" fill="#fff" stroke="#444" stroke-width="1"/><rect x="1226.5" y="439.5" width="20" height="19" fill="#646464" stroke="#333" stroke-width="1"/><rect x="1225" y="437.5" width="23" height="2" fill="#222"/><path d="M1209.5 446H1215.5M1220.5 448.5V454.5M1223 448.5V454.5" stroke="#444" stroke-width="1"/><path d="M1291 382.5H1233.5L1213.5 405.5" fill="none" stroke="#333" stroke-width="0.9"/><path d="M1325 426.5H1258.5L1272 450" fill="none" stroke="#333" stroke-width="0.9"/></g></svg>
<div class="t k" style="left:1121.00px;top:249.20px;font-size:12px;line-height:12px;color:#111;transform:scaleX(0.8690);transform-origin:0 0;">a</div>
<div class="t k" style="left:999.00px;top:295.00px;font-size:12px;line-height:12px;color:#111;transform:scaleX(0.9739);transform-origin:0 0;">h</div>
<div class="t k" style="left:1245.00px;top:321.40px;font-size:13px;line-height:13px;color:#111;transform:scaleX(0.9715);transform-origin:0 0;">Calha</div>
<div class="t k" style="left:1233.40px;top:354.10px;font-size:13px;line-height:13px;color:#111;">Condutor</div>
<div class="t k" style="left:1239.80px;top:367.70px;font-size:13px;line-height:13px;color:#111;transform:scaleX(0.9898);transform-origin:0 0;">Vertical</div>
<div class="t k" style="left:1265.40px;top:398.40px;font-size:13px;line-height:13px;color:#111;transform:scaleX(0.9835);transform-origin:0 0;">Condutor</div>
<div class="t k" style="left:1262.90px;top:412.50px;font-size:13px;line-height:13px;color:#111;transform:scaleX(0.9927);transform-origin:0 0;">Horizontal</div>
<div class="t k" style="left:1219.30px;top:465.60px;font-size:13px;line-height:13px;color:#111;transform:scaleX(0.9628);transform-origin:0 0;">Caixa</div>
<div class="t k" style="left:1211.60px;top:480.40px;font-size:13px;line-height:13px;color:#111;transform:scaleX(0.9748);transform-origin:0 0;">Coletora</div>
<svg class="s" style="left:980px;top:515px;" width="300" height="160" viewBox="0 0 300 160"><g transform="translate(-980,-515)"><path d="M1071.2 565.5 H1191.8 A66 66 0 0 1 1071.2 565.5Z" fill="#00ffff"/><path d="M1071.2 565.5 H1191.8" stroke="#7f7f7f" stroke-width="1"/><path d="M1057.5 527.5 H1066 V546.3 A66 66 0 0 0 1197.3 546.3 V527.5 H1205" fill="none" stroke="#000" stroke-width="2"/><path d="M1018 565.5H1051M1018 604.5H1051M1029 565.5V604.5" stroke="#8c8c8c" stroke-width="1.2"/><path d="M1213 527.5H1245.5M1213 604.5H1245.5M1235.5 527.5V604.5" stroke="#8c8c8c" stroke-width="1.2"/><path d="M1066 620V653.5M1197.5 620V653.5M1066 642H1197.5" stroke="#8c8c8c" stroke-width="1.2"/><path d="M1024.7 561.5 L1033.3 569.5" stroke="#000" stroke-width="1.8"/><path d="M1024.7 600.5 L1033.3 608.5" stroke="#000" stroke-width="1.8"/><path d="M1231.2 523.5 L1239.8 531.5" stroke="#000" stroke-width="1.8"/><path d="M1231.2 600.5 L1239.8 608.5" stroke="#000" stroke-width="1.8"/><path d="M1061.7 646 L1070.3 638" stroke="#000" stroke-width="1.8"/><path d="M1193.2 646 L1201.8 638" stroke="#000" stroke-width="1.8"/></g></svg>
<div class="t" style="left:989.40px;top:582.05px;font-size:11.5px;line-height:11.5px;color:#000;font-weight:bold;transform:scaleX(1.0812);transform-origin:0 0;">7,50</div>
<div class="t" style="left:1245.50px;top:563.05px;font-size:11.5px;line-height:11.5px;color:#000;font-weight:bold;transform:scaleX(1.0841);transform-origin:0 0;">12,50</div>
<div class="t" style="left:1117.80px;top:655.25px;font-size:11.5px;line-height:11.5px;color:#000;font-weight:bold;transform:scaleX(1.0841);transform-origin:0 0;">25,00</div>
<div class="r" style="left:0px;top:728px;width:1366px;height:1px;background:#303a36;"></div>
<div class="r" style="left:0px;top:729px;width:1366px;height:1px;background:#8a8f94;"></div>
<svg class="s" style="left:8px;top:730px;" width="38" height="37" viewBox="0 0 38 37"><defs><radialGradient id="orb" cx="50%" cy="35%" r="65%"><stop offset="0" stop-color="#8fc3e8"/><stop offset="0.45" stop-color="#2a6fb0"/><stop offset="0.8" stop-color="#0f3f78"/><stop offset="1" stop-color="#1aa6e8"/></radialGradient></defs><circle cx="19" cy="18.5" r="18" fill="url(#orb)" stroke="#4a5560" stroke-width="1"/><path d="M9 12 Q13 9 18 11 L16.5 17.5 Q12 16 7.5 18Z" fill="#f0622a"/><path d="M19.5 11.5 Q24 13 29.5 11 L28 18 Q23 19.5 18 18Z" fill="#8cc63e"/><path d="M7.2 19.5 Q12 17.5 16.2 19 L14.8 25.5 Q10 24 5.8 26Z" fill="#3aa0e8"/><path d="M17.8 19.5 Q23 21 27.8 19.5 L26.3 26.5 Q21 28 16.4 26Z" fill="#f8c222"/><ellipse cx="19" cy="10" rx="13" ry="7" fill="#fff" opacity="0.18"/></svg>
<svg class="s" style="left:73px;top:732px;" width="32" height="32" viewBox="0 0 32 32"><circle cx="16" cy="16" r="16" fill="#db4437"/><path d="M16 16 L29.86 8 A16 16 0 0 1 16 32Z" fill="#fcc934"/><path d="M16 16 L16 32 A16 16 0 0 1 2.14 8Z" fill="#1e9c4a"/><path d="M16 16 L2.14 8 A16 16 0 0 1 29.86 8Z" fill="#db4437"/><circle cx="16" cy="16" r="7.5" fill="#fff"/><circle cx="16" cy="16" r="6" fill="#3b78e7"/></svg>
<svg class="s" style="left:137px;top:737px;" width="27" height="26" viewBox="0 0 27 26"><rect x="5" y="1" width="21" height="23" fill="#a8cfee" stroke="#6b9cc8" stroke-width="0.8"/><rect x="2.5" y="2" width="21" height="23" fill="#b8d9f2" stroke="#6b9cc8" stroke-width="0.8"/><rect x="0.5" y="3" width="21" height="22" fill="#9ec8ea" stroke="#6b9cc8" stroke-width="0.8"/><circle cx="11" cy="13" r="8.5" fill="#f07a1a"/><path d="M8 8.5 L16 13 L8 17.5Z" fill="#fff"/></svg>
<svg class="s" style="left:196px;top:732px;" width="33" height="31" viewBox="0 0 33 31"><defs><linearGradient id="scr" x1="0" y1="0" x2="1" y2="1"><stop offset="0" stop-color="#1010c0"/><stop offset="0.6" stop-color="#3050e0"/><stop offset="1" stop-color="#c8d8ff"/></linearGradient></defs><path d="M6 0.5 L32 3 V23 L6 20Z" fill="#e8e8e4" stroke="#a8a8a0" stroke-width="0.6"/><path d="M8 2.5 L30 4.5 V21 L8 18.5Z" fill="url(#scr)"/><path d="M13 22 L21 23 L23 27 L11 27Z" fill="#d0d0cc"/><ellipse cx="17" cy="27.5" rx="8" ry="3" fill="#d8d8d4"/><rect x="0.5" y="6.5" width="23" height="9.5" rx="1" fill="#e0e4e8" stroke="#a0a4a8" stroke-width="0.6"/><rect x="1.5" y="7.5" width="21" height="7.5" fill="#3a8ae0"/><path d="M3 9.5H21M3 11.5H21M3 13.5H21" stroke="#fff" stroke-width="0.9" stroke-dasharray="1.2 0.9"/></svg>
<svg class="s" style="left:259px;top:732px;" width="33" height="31" viewBox="0 0 33 31"><defs><radialGradient id="ieg" cx="55%" cy="75%" r="70%"><stop offset="0" stop-color="#7ad8ff"/><stop offset="0.6" stop-color="#2a90e0"/><stop offset="1" stop-color="#1060b0"/></radialGradient></defs><path d="M17 5 C9.5 5 5 10.5 5 17 C5 24 10 29 17 29 C23 29 27 26 28.5 21.5 H21 C20 23.5 18.5 24.5 17 24.5 C14 24.5 11.5 22 11.5 19.5 H29 C29.2 18.5 29.2 17.8 29.2 17 C29.2 10.5 24.5 5 17 5Z M11.7 14.5 C12.3 11.5 14.5 9.5 17 9.5 C20 9.5 22 11.5 22.5 14.5Z" fill="url(#ieg)"/><path d="M3 29 C-1 25 8 9 19 4 C26 0.5 31.5 1 30.5 5 C30 7 28.5 8.5 27 9.5" fill="none" stroke="#f2b318" stroke-width="1.8"/></svg>
<svg class="s" style="left:321px;top:732px;" width="32" height="32" viewBox="0 0 32 32"><path d="M1 1 Q16 10 31 1 Q22 16 31 31 Q16 22 1 31 Q10 16 1 1Z" fill="#f4e428" stroke="#e83020" stroke-width="1"/><path d="M2.5 2.5 Q16 16 29.5 2.5 Q16 16 29.5 29.5 Q16 16 2.5 29.5 Q16 16 2.5 2.5Z" fill="#ee2020"/><rect x="9" y="9" width="14" height="14" fill="#ee2020"/><path d="M16 8V14M16 18V24M8 16H14M18 16H24" stroke="#fff" stroke-width="1.2" stroke-dasharray="1.5 1"/><rect x="15" y="15" width="2" height="2" fill="#ffe000"/><path d="M2 2L7 7M30 2L25 7M2 30L7 25M30 30L25 25" stroke="#fff" stroke-width="0.8" stroke-dasharray="1.2 0.8"/></svg>
<svg class="s" style="left:383px;top:732px;" width="32" height="32" viewBox="0 0 32 32"><rect x="0" y="0" width="32" height="32" fill="#fff"/><defs><linearGradient id="fb" x1="0" y1="0" x2="0" y2="1"><stop offset="0" stop-color="#3048b0"/><stop offset="1" stop-color="#a8a0f8"/></linearGradient><linearGradient id="fl" x1="0" y1="0" x2="0" y2="1"><stop offset="0" stop-color="#f4fbff"/><stop offset="0.5" stop-color="#b8def8"/><stop offset="1" stop-color="#90c8f0"/></linearGradient></defs><rect x="1" y="1" width="30" height="30" fill="url(#fb)"/><rect x="4" y="1" width="24" height="30" fill="#3a3a3a"/><rect x="8" y="3" width="16" height="27" fill="url(#fl)"/><rect x="8" y="15" width="16" height="2" fill="#3a3a3a"/><rect x="5" y="4" width="2" height="2" fill="#8a80f0"/><rect x="25" y="4" width="2" height="2" fill="#8a80f0"/><rect x="5" y="8" width="2" height="2" fill="#8a80f0"/><rect x="25" y="8" width="2" height="2" fill="#8a80f0"/><rect x="5" y="12" width="2" height="2" fill="#8a80f0"/><rect x="25" y="12" width="2" height="2" fill="#8a80f0"/><rect x="5" y="16" width="2" height="2" fill="#8a80f0"/><rect x="25" y="16" width="2" height="2" fill="#8a80f0"/><rect x="5" y="20" width="2" height="2" fill="#8a80f0"/><rect x="25" y="20" width="2" height="2" fill="#8a80f0"/><rect x="5" y="24" width="2" height="2" fill="#8a80f0"/><rect x="25" y="24" width="2" height="2" fill="#8a80f0"/><rect x="5" y="28" width="2" height="2" fill="#8a80f0"/><rect x="25" y="28" width="2" height="2" fill="#8a80f0"/></svg>
<svg class="s" style="left:445px;top:735px;" width="32" height="29" viewBox="0 0 32 29"><path d="M1 2.5 H11 L12.5 4.5 H31 V28 H1Z" fill="#e8c868" stroke="#c8a040" stroke-width="0.6"/><rect x="3" y="1.5" width="10" height="5" fill="#fff"/><rect x="5" y="1" width="3" height="2" fill="#20b030"/><rect x="11" y="3.5" width="10" height="5" fill="#fff"/><rect x="12" y="3.5" width="3" height="2" fill="#e03030"/><rect x="19" y="5.5" width="10" height="5" fill="#fff"/><rect x="20" y="5.5" width="3" height="2" fill="#2a80e0"/><path d="M1 8 H31 V28 H1Z" fill="#f6e3a0" stroke="#c8a040" stroke-width="0.6"/><path d="M4 28.5 V17 H28 V28.5 H23 V22 H9 V28.5Z" fill="#70c8f0" stroke="#3a90c8" stroke-width="0.7"/><path d="M5 18 H27" stroke="#d8f2ff" stroke-width="1.2"/></svg>
<svg class="s" style="left:507px;top:732px;" width="32" height="32" viewBox="0 0 32 32"><defs><radialGradient id="ff" cx="65%" cy="15%" r="95%"><stop offset="0" stop-color="#fff44f"/><stop offset="0.35" stop-color="#ff9a1f"/><stop offset="0.7" stop-color="#ff4a3a"/><stop offset="1" stop-color="#e0208a"/></radialGradient></defs><path d="M22 0 C30 6 32 12 31 18 C30 26 24 31 16 31 C7 31 1 25 1 17 C1 12 3 9 5 7 C5 10 6 11 7 12 C8 8 11 5 15 4 C13 7 14 9 16 9 C19 9 21 7 22 0Z" fill="url(#ff)"/><circle cx="17" cy="16" r="7" fill="#7b3bd6"/><circle cx="18" cy="14.5" r="4.5" fill="#9a5af0" opacity="0.7"/><path d="M4 11 C7 10 10 11 12 13 C10 13 9 15 9.5 17 C7 16 5 14 4 11Z" fill="#ff9a2a"/></svg>
<svg class="s" style="left:573px;top:732px;" width="26" height="31" viewBox="0 0 26 31"><defs><linearGradient id="lid" x1="0" y1="0" x2="1" y2="1"><stop offset="0" stop-color="#f4f8ff"/><stop offset="1" stop-color="#8aa4e8"/></linearGradient></defs><path d="M0.5 19.5 L14 30.5 L25 23.5 L24.5 21 L11.5 11 L0.5 17Z" fill="#7a9ae8" stroke="#4a62b8" stroke-width="0.7"/><path d="M4 18 L13 25 L22 20 L12 13Z" fill="#dfe8f8"/><path d="M7 18 L12 22 L17 19 L12 15Z" fill="#70c080"/><path d="M12 20 L16 23 L23 19 L19 16Z" fill="#e8d040"/><path d="M1 17.5 L13 1 L19 2 L6 19.5Z" fill="url(#lid)" stroke="#6a80c0" stroke-width="0.6"/></svg>
<svg class="s" style="left:632px;top:733px;" width="31" height="30" viewBox="0 0 31 30"><rect x="13" y="4" width="17" height="22" fill="#fff" stroke="#1e7145" stroke-width="1"/><path d="M16 8H27M16 11.5H27M16 15H27M16 18.5H27M16 22H27M21.5 6V24" stroke="#1e7145" stroke-width="1.2"/><path d="M0 4 L17 0.5 V29.5 L0 26Z" fill="#1e7145"/><path d="M4 9 L12 21 M12 9 L4 21" stroke="#fff" stroke-width="2.6"/></svg>
<svg class="s" style="left:1176px;top:742px;" width="17" height="15" viewBox="0 0 17 15"><path d="M1 0.5V14.5" stroke="#ddd" stroke-width="1.2"/><path d="M2 1 H8 L9 2.5 H13 V8 H9 L8 6.5 H2Z" fill="#fff"/><circle cx="11.5" cy="11" r="4" fill="#e02828" stroke="#fff" stroke-width="0.8"/><path d="M9.8 9.3L13.2 12.7M13.2 9.3L9.8 12.7" stroke="#fff" stroke-width="1.2"/></svg>
<svg class="s" style="left:1201px;top:744px;" width="15" height="11" viewBox="0 0 15 11"><rect x="0" y="8" width="2" height="2" fill="#fff"/><rect x="3" y="6" width="2" height="4" fill="#fff"/><rect x="6" y="4" width="2" height="6" fill="#fff"/><rect x="9" y="2" width="2" height="8" fill="#fff"/><rect x="12" y="0" width="2" height="10" fill="#fff"/></svg>
<svg class="s" style="left:1224px;top:742px;" width="16" height="15" viewBox="0 0 16 15"><path d="M1 5H4L8 1V14L4 10H1Z" fill="#fff"/><path d="M10 5Q12 7.5 10 10M12 3Q15.5 7.5 12 12" fill="none" stroke="#fff" stroke-width="1.1"/></svg>
<svg class="s" style="left:1249px;top:741px;" width="14" height="17" viewBox="0 0 14 17"><rect x="0.5" y="3.5" width="8" height="10" fill="none" stroke="#fff"/><rect x="2.5" y="1.5" width="8" height="12" fill="#111" stroke="#fff"/><path d="M6 6H13M7 9H12V11H9V16" fill="none" stroke="#fff" stroke-width="1.5"/></svg>
</body></html>
